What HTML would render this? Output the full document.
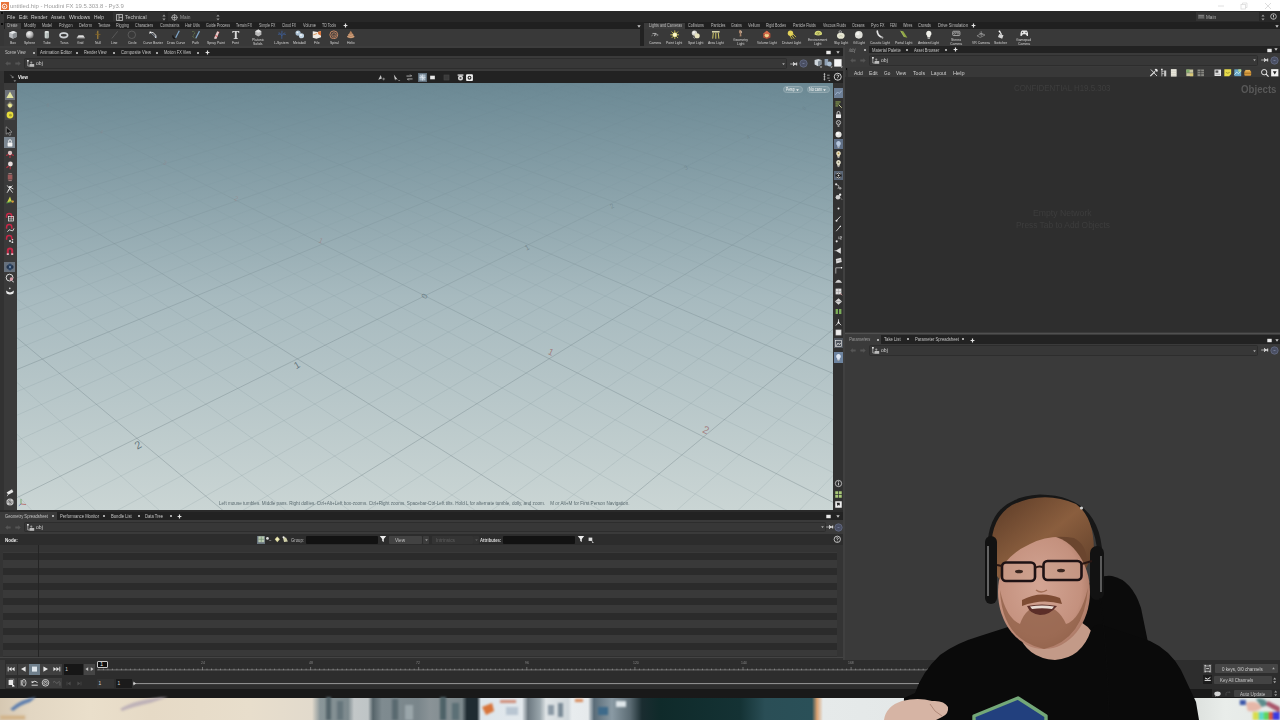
<!DOCTYPE html><html><head><meta charset="utf-8"><title>untitled.hip - Houdini FX 19.5.303.8 - Py3.9</title><style>
*{box-sizing:border-box;margin:0;padding:0}
html,body{width:1280px;height:720px;overflow:hidden;background:#3a3a3a}
body{font-family:"Liberation Sans",sans-serif;color:#c8c8c8;position:relative;font-size:5.5px;line-height:1}
.a{position:absolute}
.t{position:absolute;white-space:nowrap;transform-origin:0 0;line-height:1}
b{font-weight:bold}
</style></head><body>
<div class="a" style="left:0px;top:0px;width:1280px;height:11px;background:#ffffff;"></div>
<div class="t" style="left:10.00px;top:2px;font-size:6.2px;line-height:7px;color:#9c9c9c;transform:scaleX(0.962);">untitled.hip - Houdini FX 19.5.303.8 - Py3.9</div>
<svg class="a" style="left:1px;top:1.5px;" width="8" height="8" viewBox="0 0 8 8"><rect width="8" height="8" fill="#e8743a"/><circle cx="3.6" cy="4.4" r="2.3" fill="none" stroke="#fff" stroke-width="0.9"/><circle cx="3.3" cy="4.7" r="0.8" fill="#fff"/></svg>
<svg class="a" style="left:1217px;top:2px;" width="8" height="8" viewBox="0 0 8 8"><path d="M1 4H7" stroke="#d8d8d8" stroke-width="0.8"/></svg>
<svg class="a" style="left:1240px;top:1.5px;" width="8" height="8" viewBox="0 0 8 8"><rect x="1" y="2.5" width="4.5" height="4.5" fill="none" stroke="#d8d8d8" stroke-width="0.7"/><path d="M2.5 2.5V1H7V5.5H5.5" fill="none" stroke="#d8d8d8" stroke-width="0.7"/></svg>
<svg class="a" style="left:1264px;top:1.5px;" width="8" height="8" viewBox="0 0 8 8"><path d="M1 1L7 7M7 1L1 7" stroke="#d4d4d4" stroke-width="0.8"/></svg>
<div class="a" style="left:0px;top:11px;width:1280px;height:11.3px;background:#282828;"></div>
<div class="a" style="left:0px;top:11px;width:4.2px;height:11.3px;background:#363636;"></div>
<div class="a" style="left:1.4px;top:12.4px;width:1.6px;height:1.6px;background:#0a0a0a;"></div>
<div class="t" style="left:6.60px;top:13px;font-size:6.2px;line-height:7px;color:#d2d2d2;transform:scaleX(0.841);">File</div>
<div class="t" style="left:18.70px;top:13px;font-size:6.2px;line-height:7px;color:#d2d2d2;transform:scaleX(0.824);">Edit</div>
<div class="t" style="left:31.00px;top:13px;font-size:6.2px;line-height:7px;color:#d2d2d2;transform:scaleX(0.811);">Render</div>
<div class="t" style="left:51.00px;top:13px;font-size:6.2px;line-height:7px;color:#d2d2d2;transform:scaleX(0.752);">Assets</div>
<div class="t" style="left:69.00px;top:13px;font-size:6.2px;line-height:7px;color:#d2d2d2;transform:scaleX(0.835);">Windows</div>
<div class="t" style="left:94.00px;top:13px;font-size:6.2px;line-height:7px;color:#d2d2d2;transform:scaleX(0.784);">Help</div>
<div class="a" style="left:113px;top:12.3px;width:52px;height:9px;background:#303030;"></div>
<svg class="a" style="left:116px;top:13.5px;" width="7" height="7" viewBox="0 0 7 7"><rect x="0.6" y="0.6" width="5.8" height="5.8" fill="none" stroke="#bdbdbd" stroke-width="0.9"/><path d="M3 0.6V6.4M3 3.4H6.4" stroke="#bdbdbd" stroke-width="0.8"/></svg>
<div class="t" style="left:125.40px;top:13px;font-size:6.2px;line-height:7px;color:#c4c4c4;transform:scaleX(0.836);">Technical</div>
<svg class="a" style="left:161.5px;top:13.5px;" width="4" height="7" viewBox="0 0 4 7"><path d="M2 0.5L3.6 2.6H0.4ZM2 6.5L3.6 4.4H0.4Z" fill="#9a9a9a"/></svg>
<div class="a" style="left:168px;top:12.3px;width:49px;height:9px;background:#303030;"></div>
<svg class="a" style="left:171px;top:13.5px;" width="7" height="7" viewBox="0 0 7 7"><circle cx="3.5" cy="3.5" r="2.6" fill="none" stroke="#bdbdbd" stroke-width="0.8"/><circle cx="3.5" cy="3.5" r="0.9" fill="#bdbdbd"/><path d="M3.5 0V7M0 3.5H7" stroke="#bdbdbd" stroke-width="0.5"/></svg>
<div class="t" style="left:180.00px;top:13px;font-size:6.2px;line-height:7px;color:#9e9e9e;transform:scaleX(0.781);">Main</div>
<svg class="a" style="left:216px;top:13.5px;" width="4" height="7" viewBox="0 0 4 7"><path d="M2 0.5L3.6 2.6H0.4ZM2 6.5L3.6 4.4H0.4Z" fill="#9a9a9a"/></svg>
<div class="a" style="left:1196px;top:12.3px;width:63px;height:9px;background:#333;"></div>
<svg class="a" style="left:1197.5px;top:13.5px;" width="7" height="6" viewBox="0 0 7 6"><rect x="0" y="0.5" width="6.5" height="4.5" fill="#555"/><path d="M0.5 1.5H6M0.5 3H6" stroke="#999" stroke-width="0.6"/></svg>
<div class="t" style="left:1206.00px;top:14px;font-size:6px;line-height:6px;color:#b4b4b4;transform:scaleX(0.769);">Main</div>
<svg class="a" style="left:1260.5px;top:13.5px;" width="4" height="7" viewBox="0 0 4 7"><path d="M2 0.5L3.6 2.6H0.4ZM2 6.5L3.6 4.4H0.4Z" fill="#9a9a9a"/></svg>
<svg class="a" style="left:1269.5px;top:13.2px;" width="7" height="7" viewBox="0 0 7 7"><circle cx="3.5" cy="3.5" r="2.8" fill="none" stroke="#d0d0d0" stroke-width="0.8"/><path d="M3.5 1.8V4M3.5 4.6V5.4" stroke="#d0d0d0" stroke-width="0.9"/></svg>
<div class="a" style="left:0px;top:22.3px;width:1280px;height:7px;background:#202020;"></div>
<div class="a" style="left:0px;top:29.2px;width:1280px;height:16.6px;background:#393939;"></div>
<div class="a" style="left:0px;top:45.8px;width:1280px;height:1.2px;background:#252525;"></div>
<div class="a" style="left:640px;top:22.3px;width:3.5px;height:23.5px;background:#222;"></div>
<div class="a" style="left:0px;top:22.3px;width:4.2px;height:23.5px;background:#363636;"></div>
<div class="a" style="left:1.4px;top:23.4px;width:1.6px;height:1.6px;background:#0a0a0a;"></div>
<div class="a" style="left:4.8px;top:22.6px;width:15.8px;height:6.8px;background:#3b3b3b;"></div>
<div class="a" style="left:643.5px;top:22.6px;width:41.5px;height:6.8px;background:#3b3b3b;"></div>
<div class="t" style="left:7.00px;top:22px;font-size:5.2px;line-height:6px;color:#bcbcbc;transform:scaleX(0.673);">Create</div>
<div class="t" style="left:24.00px;top:22px;font-size:5.2px;line-height:6px;color:#bcbcbc;transform:scaleX(0.783);">Modify</div>
<div class="t" style="left:42.00px;top:22px;font-size:5.2px;line-height:6px;color:#bcbcbc;transform:scaleX(0.706);">Model</div>
<div class="t" style="left:59.00px;top:22px;font-size:5.2px;line-height:6px;color:#bcbcbc;transform:scaleX(0.718);">Polygon</div>
<div class="t" style="left:79.00px;top:22px;font-size:5.2px;line-height:6px;color:#bcbcbc;transform:scaleX(0.763);">Deform</div>
<div class="t" style="left:97.50px;top:22px;font-size:5.2px;line-height:6px;color:#bcbcbc;transform:scaleX(0.733);">Texture</div>
<div class="t" style="left:116.00px;top:22px;font-size:5.2px;line-height:6px;color:#bcbcbc;transform:scaleX(0.737);">Rigging</div>
<div class="t" style="left:135.00px;top:22px;font-size:5.2px;line-height:6px;color:#bcbcbc;transform:scaleX(0.708);">Characters</div>
<div class="t" style="left:159.50px;top:22px;font-size:5.2px;line-height:6px;color:#bcbcbc;transform:scaleX(0.741);">Constraints</div>
<div class="t" style="left:185.00px;top:22px;font-size:5.2px;line-height:6px;color:#bcbcbc;transform:scaleX(0.711);">Hair Utils</div>
<div class="t" style="left:206.00px;top:22px;font-size:5.2px;line-height:6px;color:#bcbcbc;transform:scaleX(0.704);">Guide Process</div>
<div class="t" style="left:236.00px;top:22px;font-size:5.2px;line-height:6px;color:#bcbcbc;transform:scaleX(0.667);">Terrain FX</div>
<div class="t" style="left:259.00px;top:22px;font-size:5.2px;line-height:6px;color:#bcbcbc;transform:scaleX(0.688);">Simple FX</div>
<div class="t" style="left:282.00px;top:22px;font-size:5.2px;line-height:6px;color:#bcbcbc;transform:scaleX(0.646);">Cloud FX</div>
<div class="t" style="left:302.50px;top:22px;font-size:5.2px;line-height:6px;color:#bcbcbc;transform:scaleX(0.749);">Volume</div>
<div class="t" style="left:322.00px;top:22px;font-size:5.2px;line-height:6px;color:#bcbcbc;transform:scaleX(0.686);">TD Tools</div>
<div class="t" style="left:648.75px;top:22px;font-size:5.2px;line-height:6px;color:#bcbcbc;transform:scaleX(0.714);">Lights and Cameras</div>
<div class="t" style="left:688.00px;top:22px;font-size:5.2px;line-height:6px;color:#bcbcbc;transform:scaleX(0.719);">Collisions</div>
<div class="t" style="left:710.50px;top:22px;font-size:5.2px;line-height:6px;color:#bcbcbc;transform:scaleX(0.727);">Particles</div>
<div class="t" style="left:731.00px;top:22px;font-size:5.2px;line-height:6px;color:#bcbcbc;transform:scaleX(0.718);">Grains</div>
<div class="t" style="left:748.00px;top:22px;font-size:5.2px;line-height:6px;color:#bcbcbc;transform:scaleX(0.769);">Vellum</div>
<div class="t" style="left:766.00px;top:22px;font-size:5.2px;line-height:6px;color:#bcbcbc;transform:scaleX(0.685);">Rigid Bodies</div>
<div class="t" style="left:793.00px;top:22px;font-size:5.2px;line-height:6px;color:#bcbcbc;transform:scaleX(0.704);">Particle Fluids</div>
<div class="t" style="left:822.50px;top:22px;font-size:5.2px;line-height:6px;color:#bcbcbc;transform:scaleX(0.688);">Viscous Fluids</div>
<div class="t" style="left:852.00px;top:22px;font-size:5.2px;line-height:6px;color:#bcbcbc;transform:scaleX(0.698);">Oceans</div>
<div class="t" style="left:870.50px;top:22px;font-size:5.2px;line-height:6px;color:#bcbcbc;transform:scaleX(0.719);">Pyro FX</div>
<div class="t" style="left:889.50px;top:22px;font-size:5.2px;line-height:6px;color:#bcbcbc;transform:scaleX(0.592);">FEM</div>
<div class="t" style="left:902.50px;top:22px;font-size:5.2px;line-height:6px;color:#bcbcbc;transform:scaleX(0.715);">Wires</div>
<div class="t" style="left:918.00px;top:22px;font-size:5.2px;line-height:6px;color:#bcbcbc;transform:scaleX(0.738);">Crowds</div>
<div class="t" style="left:937.50px;top:22px;font-size:5.2px;line-height:6px;color:#bcbcbc;transform:scaleX(0.792);">Drive Simulation</div>
<svg class="a" style="left:342.5px;top:23.3px;" width="5" height="5" viewBox="0 0 5 5"><path d="M2.5 0.6V4.4M0.6 2.5H4.4" stroke="#e4e4e4" stroke-width="1.2"/></svg>
<svg class="a" style="left:971.3px;top:23.3px;" width="5" height="5" viewBox="0 0 5 5"><path d="M2.5 0.6V4.4M0.6 2.5H4.4" stroke="#e4e4e4" stroke-width="1.2"/></svg>
<svg class="a" style="left:636.5px;top:24.5px;" width="4" height="3" viewBox="0 0 4 3"><path d="M0.3 0.3H3.7L2 2.7Z" fill="#c8c8c8"/></svg>
<svg class="a" style="left:1275px;top:24.5px;" width="4" height="3" viewBox="0 0 4 3"><path d="M0.3 0.3H3.7L2 2.7Z" fill="#c8c8c8"/></svg>
<div class="t" style="left:10.04px;top:40px;font-size:4.3px;line-height:5px;color:#d4d4d4;transform:scaleX(0.800);">Box</div>
<div class="t" style="left:24.45px;top:40px;font-size:4.3px;line-height:5px;color:#d4d4d4;transform:scaleX(0.800);">Sphere</div>
<div class="t" style="left:43.14px;top:40px;font-size:4.3px;line-height:5px;color:#d4d4d4;transform:scaleX(0.800);">Tube</div>
<div class="t" style="left:59.79px;top:40px;font-size:4.3px;line-height:5px;color:#d4d4d4;transform:scaleX(0.800);">Torus</div>
<div class="t" style="left:77.25px;top:40px;font-size:4.3px;line-height:5px;color:#d4d4d4;transform:scaleX(0.800);">Grid</div>
<div class="t" style="left:94.54px;top:40px;font-size:4.3px;line-height:5px;color:#d4d4d4;transform:scaleX(0.800);">Null</div>
<div class="t" style="left:111.25px;top:40px;font-size:4.3px;line-height:5px;color:#d4d4d4;transform:scaleX(0.800);">Line</div>
<div class="t" style="left:127.60px;top:40px;font-size:4.3px;line-height:5px;color:#d4d4d4;transform:scaleX(0.800);">Circle</div>
<div class="t" style="left:142.56px;top:40px;font-size:4.3px;line-height:5px;color:#d4d4d4;transform:scaleX(0.800);">Curve Bezier</div>
<div class="t" style="left:166.92px;top:40px;font-size:4.3px;line-height:5px;color:#d4d4d4;transform:scaleX(0.800);">Draw Curve</div>
<div class="t" style="left:192.46px;top:40px;font-size:4.3px;line-height:5px;color:#d4d4d4;transform:scaleX(0.800);">Path</div>
<div class="t" style="left:206.61px;top:40px;font-size:4.3px;line-height:5px;color:#d4d4d4;transform:scaleX(0.800);">Spray Paint</div>
<div class="t" style="left:232.06px;top:40px;font-size:4.3px;line-height:5px;color:#d4d4d4;transform:scaleX(0.800);">Font</div>
<div class="t" style="left:251.88px;top:37px;font-size:4.3px;line-height:5px;color:#d4d4d4;transform:scaleX(0.800);">Platonic</div>
<div class="t" style="left:253.32px;top:41px;font-size:4.3px;line-height:5px;color:#d4d4d4;transform:scaleX(0.800);">Solids</div>
<div class="t" style="left:274.24px;top:40px;font-size:4.3px;line-height:5px;color:#d4d4d4;transform:scaleX(0.800);">L-System</div>
<div class="t" style="left:293.00px;top:40px;font-size:4.3px;line-height:5px;color:#d4d4d4;transform:scaleX(0.800);">Metaball</div>
<div class="t" style="left:314.23px;top:40px;font-size:4.3px;line-height:5px;color:#d4d4d4;transform:scaleX(0.800);">File</div>
<div class="t" style="left:329.60px;top:40px;font-size:4.3px;line-height:5px;color:#d4d4d4;transform:scaleX(0.800);">Spiral</div>
<div class="t" style="left:347.18px;top:40px;font-size:4.3px;line-height:5px;color:#d4d4d4;transform:scaleX(0.800);">Helix</div>
<div class="t" style="left:648.88px;top:40px;font-size:4.3px;line-height:5px;color:#d4d4d4;transform:scaleX(0.800);">Camera</div>
<div class="t" style="left:666.37px;top:40px;font-size:4.3px;line-height:5px;color:#d4d4d4;transform:scaleX(0.800);">Point Light</div>
<div class="t" style="left:687.75px;top:40px;font-size:4.3px;line-height:5px;color:#d4d4d4;transform:scaleX(0.800);">Spot Light</div>
<div class="t" style="left:708.16px;top:40px;font-size:4.3px;line-height:5px;color:#d4d4d4;transform:scaleX(0.800);">Area Light</div>
<div class="t" style="left:732.95px;top:37px;font-size:4.3px;line-height:5px;color:#d4d4d4;transform:scaleX(0.800);">Geometry</div>
<div class="t" style="left:736.77px;top:41px;font-size:4.3px;line-height:5px;color:#d4d4d4;transform:scaleX(0.800);">Light</div>
<div class="t" style="left:756.81px;top:40px;font-size:4.3px;line-height:5px;color:#d4d4d4;transform:scaleX(0.800);">Volume Light</div>
<div class="t" style="left:782.44px;top:40px;font-size:4.3px;line-height:5px;color:#d4d4d4;transform:scaleX(0.800);">Distant Light</div>
<div class="t" style="left:808.34px;top:37px;font-size:4.3px;line-height:5px;color:#d4d4d4;transform:scaleX(0.800);">Environment</div>
<div class="t" style="left:814.27px;top:41px;font-size:4.3px;line-height:5px;color:#d4d4d4;transform:scaleX(0.800);">Light</div>
<div class="t" style="left:833.93px;top:40px;font-size:4.3px;line-height:5px;color:#d4d4d4;transform:scaleX(0.800);">Sky Light</div>
<div class="t" style="left:852.73px;top:40px;font-size:4.3px;line-height:5px;color:#d4d4d4;transform:scaleX(0.800);">GI Light</div>
<div class="t" style="left:870.06px;top:40px;font-size:4.3px;line-height:5px;color:#d4d4d4;transform:scaleX(0.800);">Caustic Light</div>
<div class="t" style="left:895.05px;top:40px;font-size:4.3px;line-height:5px;color:#d4d4d4;transform:scaleX(0.800);">Portal Light</div>
<div class="t" style="left:918.23px;top:40px;font-size:4.3px;line-height:5px;color:#d4d4d4;transform:scaleX(0.800);">Ambient Light</div>
<div class="t" style="left:951.43px;top:37px;font-size:4.3px;line-height:5px;color:#d4d4d4;transform:scaleX(0.800);">Stereo</div>
<div class="t" style="left:950.38px;top:41px;font-size:4.3px;line-height:5px;color:#d4d4d4;transform:scaleX(0.800);">Camera</div>
<div class="t" style="left:972.02px;top:40px;font-size:4.3px;line-height:5px;color:#d4d4d4;transform:scaleX(0.800);">VR Camera</div>
<div class="t" style="left:994.40px;top:40px;font-size:4.3px;line-height:5px;color:#d4d4d4;transform:scaleX(0.800);">Switcher</div>
<div class="t" style="left:1016.45px;top:37px;font-size:4.3px;line-height:5px;color:#d4d4d4;transform:scaleX(0.800);">Gamepad</div>
<div class="t" style="left:1017.88px;top:41px;font-size:4.3px;line-height:5px;color:#d4d4d4;transform:scaleX(0.800);">Camera</div>
<svg class="a" style="left:8.2px;top:29.6px;" width="9.6" height="9.6" viewBox="0 0 10 10"><path d="M1.2 2.6L5.4 1L9 2.4V7.2L5 9L1.2 7.4Z" fill="#b9bcbf"/><path d="M1.2 2.6L5 4.2L9 2.4L5.4 1Z" fill="#e4e6e8"/><path d="M5 4.2V9L9 7.2V2.4Z" fill="#8c9094"/></svg>
<svg class="a" style="left:25.2px;top:29.6px;" width="9.6" height="9.6" viewBox="0 0 10 10"><defs><radialGradient id="sg" cx="0.38" cy="0.32" r="0.7"><stop offset="0" stop-color="#f4f4f4"/><stop offset="0.6" stop-color="#b8b8b8"/><stop offset="1" stop-color="#6c6c6c"/></radialGradient></defs><circle cx="5" cy="5" r="4" fill="url(#sg)"/></svg>
<svg class="a" style="left:42.2px;top:29.6px;" width="9.6" height="9.6" viewBox="0 0 10 10"><rect x="2.7" y="1.4" width="4.6" height="7.4" rx="1.6" fill="#aeb6b4"/><ellipse cx="5" cy="2" rx="2.3" ry="0.9" fill="#e2e6e4"/><rect x="3.4" y="2.8" width="1.2" height="5.4" fill="#d6dcda"/></svg>
<svg class="a" style="left:59.2px;top:29.6px;" width="9.6" height="9.6" viewBox="0 0 10 10"><ellipse cx="5" cy="5.6" rx="4" ry="2.4" fill="none" stroke="#c4c8cc" stroke-width="1.7"/><ellipse cx="5" cy="5.1" rx="3.8" ry="2.2" fill="none" stroke="#eceef0" stroke-width="0.5"/></svg>
<svg class="a" style="left:75.7px;top:29.6px;" width="9.6" height="9.6" viewBox="0 0 10 10"><path d="M0.8 8L2.6 5.6H7.6L9.2 8Z" fill="#dcdcdc"/><path d="M0.8 8H9.2V8.8H0.8Z" fill="#9a9a9a"/></svg>
<svg class="a" style="left:92.7px;top:29.6px;" width="9.6" height="9.6" viewBox="0 0 10 10"><path d="M5 0.8V9.4" stroke="#b08a3a" stroke-width="1.1"/><path d="M2.4 4.6H7.8" stroke="#8a6a28" stroke-width="0.8"/><path d="M3.6 2.6L6.6 6.8" stroke="#7a5e22" stroke-width="0.6"/></svg>
<svg class="a" style="left:109.7px;top:29.6px;" width="9.6" height="9.6" viewBox="0 0 10 10"><path d="M2 8.8L8 1.4" stroke="#5e5e5e" stroke-width="0.9"/></svg>
<svg class="a" style="left:127.2px;top:29.6px;" width="9.6" height="9.6" viewBox="0 0 10 10"><circle cx="5" cy="5" r="3.9" fill="none" stroke="#6a6a6a" stroke-width="0.7"/></svg>
<svg class="a" style="left:147.7px;top:29.6px;" width="9.6" height="9.6" viewBox="0 0 10 10"><path d="M1.5 3.6C3.6 1 6.8 3 8.6 6.6" fill="none" stroke="#e6e6e6" stroke-width="1"/><path d="M2 2L8.6 8" stroke="#a8b4c8" stroke-width="0.8"/><circle cx="2.4" cy="2.4" r="0.9" fill="#fff"/><circle cx="8" cy="7.4" r="0.9" fill="#dfe6f0"/></svg>
<svg class="a" style="left:171.2px;top:29.6px;" width="9.6" height="9.6" viewBox="0 0 10 10"><path d="M8.6 0.8L4.6 8.6" stroke="#7fa6c8" stroke-width="1.3"/><path d="M2 5.6C1.6 8.4 3.6 9.2 4.8 8.2" fill="none" stroke="#141414" stroke-width="1.3"/></svg>
<svg class="a" style="left:191.2px;top:29.6px;" width="9.6" height="9.6" viewBox="0 0 10 10"><path d="M8.8 1.2L5 8.6" stroke="#7fa6c8" stroke-width="1.3"/><path d="M1.4 1.6C4.6 1 4.6 4.4 2.2 5.4C1.2 6.6 2.6 8.6 4.6 8.8" fill="none" stroke="#7d9a58" stroke-width="0.7" stroke-dasharray="1 0.8"/></svg>
<svg class="a" style="left:210.7px;top:29.6px;" width="9.6" height="9.6" viewBox="0 0 10 10"><path d="M3 8.8L6.4 1.2L8.6 2.2L5.6 9.4Z" fill="#e6c9c9"/><path d="M4.4 5.8L7 6.8" stroke="#c44" stroke-width="1"/><path d="M8 1.6L10 3.4" stroke="#a33" stroke-width="0.7"/></svg>
<svg class="a" style="left:230.7px;top:29.6px;" width="9.6" height="9.6" viewBox="0 0 10 10"><path d="M1.4 1H8.6V3H7.8C7.7 2.2 7.2 1.9 6 1.9V8C6 8.5 6.4 8.6 7.2 8.7V9.3H2.8V8.7C3.6 8.6 4 8.5 4 8V1.9C2.8 1.9 2.3 2.2 2.2 3H1.4Z" fill="#d8d8d8"/></svg>
<svg class="a" style="left:253.7px;top:29.2px;" width="8.6" height="8.6" viewBox="0 0 10 10"><path d="M5 0.6L8.6 2.6V6.6L5 8.6L1.4 6.6V2.6Z" fill="#b8b8b8"/><path d="M5 0.6L8.6 2.6L5 4.4L1.4 2.6Z" fill="#e2e2e2"/></svg>
<svg class="a" style="left:276.7px;top:29.6px;" width="9.6" height="9.6" viewBox="0 0 10 10"><path d="M5 9.2V4.6M5 6L2 2.4M5 6L8.2 2.6M5 4.6L5.2 0.8M3.4 4.2L1 4.4M6.8 4.2L9.2 4.6" stroke="#3e5f9a" stroke-width="0.9" fill="none"/></svg>
<svg class="a" style="left:294.7px;top:29.6px;" width="9.6" height="9.6" viewBox="0 0 10 10"><circle cx="3.2" cy="3.2" r="2.7" fill="#a9bfd2"/><circle cx="6.8" cy="6" r="2.7" fill="#c2d4e2"/><circle cx="2.6" cy="2.5" r="1" fill="#eef4f8"/><circle cx="6.2" cy="5.2" r="1" fill="#f4f8fa"/></svg>
<svg class="a" style="left:312.2px;top:29.6px;" width="9.6" height="9.6" viewBox="0 0 10 10"><path d="M0.8 1.4L6 2.2L9.4 1V7.6L4.6 9.2L0.8 8Z" fill="#f0ece6"/><path d="M6 2.2L9.4 1V6L6.6 4.4Z" fill="#d8743a"/><path d="M1.4 5L5.4 3.6" stroke="#e09a5a" stroke-width="1"/></svg>
<svg class="a" style="left:329.2px;top:29.6px;" width="9.6" height="9.6" viewBox="0 0 10 10"><circle cx="5" cy="5" r="4.1" fill="none" stroke="#c88a66" stroke-width="1"/><circle cx="5.2" cy="5.2" r="2.3" fill="none" stroke="#c88a66" stroke-width="0.9"/><circle cx="5.3" cy="5.4" r="0.7" fill="#c88a66"/></svg>
<svg class="a" style="left:346.2px;top:29.6px;" width="9.6" height="9.6" viewBox="0 0 10 10"><path d="M5 0.8L9 7.4Q5 10 1 7.4Z" fill="#b4825e"/><path d="M2.4 4.8Q5 6.4 7.6 4.8M1.4 6.8Q5 8.8 8.6 6.8" fill="none" stroke="#e2b894" stroke-width="0.7"/></svg>
<svg class="a" style="left:650.2px;top:29.6px;" width="9.6" height="9.6" viewBox="0 0 10 10"><path d="M2.6 3.6H6.4V5H4.8V6.4" fill="none" stroke="#c8c8c8" stroke-width="0.8"/><path d="M7 4.2L8.6 5.2L7 6.2" fill="none" stroke="#aaa" stroke-width="0.6"/><path d="M1.4 6.2L3.2 5" stroke="#999" stroke-width="0.6"/></svg>
<svg class="a" style="left:669.7px;top:29.6px;" width="9.6" height="9.6" viewBox="0 0 10 10"><circle cx="5" cy="5" r="2.4" fill="#f6f2b0"/><path d="M5 0.4V9.6M0.4 5H9.6M1.6 1.6L8.4 8.4M8.4 1.6L1.6 8.4" stroke="#e4d85a" stroke-width="0.8"/><circle cx="5" cy="5" r="1.9" fill="#fbf9d4"/></svg>
<svg class="a" style="left:690.7px;top:29.6px;" width="9.6" height="9.6" viewBox="0 0 10 10"><circle cx="3.6" cy="3.2" r="2.8" fill="#d2d2cc"/><circle cx="6.4" cy="6" r="2.7" fill="#e8e4c0"/><circle cx="3" cy="2.6" r="1.2" fill="#f4f4f0"/><path d="M2 7L4 8.8" stroke="#bbb" stroke-width="0.8"/></svg>
<svg class="a" style="left:711.2px;top:29.6px;" width="9.6" height="9.6" viewBox="0 0 10 10"><path d="M1 1.2H9V2.6H1Z" fill="#f2eebc"/><path d="M2.4 3L1.8 9M5 3V9.2M7.6 3L8.2 9" stroke="#d8cf6a" stroke-width="1"/></svg>
<svg class="a" style="left:736.2px;top:29.2px;" width="8.6" height="8.6" viewBox="0 0 10 10"><path d="M4.4 0.8C7 1.4 7.6 4 6 5.4L6.4 8.4L4.2 8.6L4.6 5.6C3 4.6 3 2 4.4 0.8Z" fill="#a8846a"/><path d="M5.6 2L6.6 4.4" stroke="#e8d8c8" stroke-width="0.8"/></svg>
<svg class="a" style="left:761.95px;top:29.6px;" width="9.6" height="9.6" viewBox="0 0 10 10"><path d="M5 0.8L8.8 3.8V7.8L5 9.4L1.2 7.8V3.8Z" fill="#b0503a"/><circle cx="5" cy="5.6" r="2.2" fill="#f0d08a"/><path d="M5 0.8L8.8 3.8L5 4.4L1.2 3.8Z" fill="#d26a4a"/></svg>
<svg class="a" style="left:787.2px;top:29.6px;" width="9.6" height="9.6" viewBox="0 0 10 10"><circle cx="3.6" cy="3.4" r="2.8" fill="#e2d25a"/><path d="M4.6 5L7.6 9M6 3.8L9.4 7.4M3 6L5.4 9.4" stroke="#d4c444" stroke-width="0.9"/></svg>
<svg class="a" style="left:813.7px;top:29.2px;" width="8.6" height="8.6" viewBox="0 0 10 10"><path d="M0.6 6.4A4.4 4.4 0 0 1 9.4 6.4Q5 8.6 0.6 6.4Z" fill="#d9dc7a"/><ellipse cx="5" cy="5" rx="2.2" ry="1.2" fill="none" stroke="#8a8c3a" stroke-width="0.6"/><circle cx="5" cy="5" r="0.6" fill="#6a6c2a"/></svg>
<svg class="a" style="left:836.2px;top:29.6px;" width="9.6" height="9.6" viewBox="0 0 10 10"><ellipse cx="5" cy="6" rx="4" ry="3.2" fill="#e6e6d2"/><circle cx="4.4" cy="2" r="1.3" fill="none" stroke="#ddd" stroke-width="0.6"/><path d="M3 6.6Q5 5 7 6.6" stroke="#b8b89a" stroke-width="0.6" fill="none"/></svg>
<svg class="a" style="left:853.95px;top:29.6px;" width="9.6" height="9.6" viewBox="0 0 10 10"><circle cx="5" cy="5" r="4" fill="#deded8"/><circle cx="4" cy="3.8" r="1.8" fill="#f2f2ee"/></svg>
<svg class="a" style="left:875.2px;top:29.6px;" width="9.6" height="9.6" viewBox="0 0 10 10"><path d="M2.4 1.2Q2.4 5.6 7.6 7.8" fill="none" stroke="#e4e4e4" stroke-width="1.8" stroke-linecap="round"/><path d="M6.4 7.2L8.6 8.6" stroke="#999" stroke-width="1.4"/></svg>
<svg class="a" style="left:898.95px;top:29.6px;" width="9.6" height="9.6" viewBox="0 0 10 10"><path d="M1.6 0.8L4.4 1.2L8.8 8L5.4 7.2Z" fill="#8fa644"/><path d="M1.6 0.8L5.4 7.2" stroke="#c8d87a" stroke-width="0.6"/></svg>
<svg class="a" style="left:923.95px;top:29.6px;" width="9.6" height="9.6" viewBox="0 0 10 10"><path d="M5 0.8A3 3 0 0 1 6.6 6.2V7.6H3.4V6.2A3 3 0 0 1 5 0.8Z" fill="#f0f0ea"/><rect x="3.8" y="7.8" width="2.4" height="1.4" fill="#bbb"/></svg>
<svg class="a" style="left:952.2px;top:29.2px;" width="8.6" height="8.6" viewBox="0 0 10 10"><rect x="0.8" y="2.6" width="8.4" height="5" rx="1" fill="none" stroke="#d0d0d0" stroke-width="0.8"/><circle cx="3" cy="5" r="1.1" fill="none" stroke="#d0d0d0" stroke-width="0.6"/><circle cx="7" cy="5" r="1.1" fill="none" stroke="#d0d0d0" stroke-width="0.6"/><path d="M4.2 3.8H5.8" stroke="#d0d0d0" stroke-width="0.6"/></svg>
<svg class="a" style="left:976.2px;top:29.6px;" width="9.6" height="9.6" viewBox="0 0 10 10"><path d="M1 6L6 3.6L9.4 5.2L4.4 7.8Z" fill="none" stroke="#9c9c9c" stroke-width="0.7"/><path d="M5.4 1.2V6.6M3.4 3.2L7.6 4.8" stroke="#b4b4b4" stroke-width="0.6"/></svg>
<svg class="a" style="left:996.2px;top:29.6px;" width="9.6" height="9.6" viewBox="0 0 10 10"><path d="M3.4 4.2L7.8 5.6L6.4 9L2 7.4Z" fill="#d4d4d4"/><path d="M3.6 1.2L5.8 4.8" stroke="#e8e8e8" stroke-width="1.2"/><circle cx="3.6" cy="1.4" r="0.9" fill="#fff"/></svg>
<svg class="a" style="left:1019.7px;top:29.2px;" width="8.6" height="8.6" viewBox="0 0 10 10"><path d="M2.4 1.8H7.6C9 2.2 9.8 6 9.4 8C8.4 8.8 7.4 7 6.6 6H3.4C2.6 7 1.6 8.8 0.6 8C0.2 6 1 2.2 2.4 1.8Z" fill="#e8e8e8"/><circle cx="3" cy="4" r="0.8" fill="#555"/><circle cx="7" cy="4" r="0.8" fill="#555"/></svg>
<div class="a" style="left:0px;top:45.8px;width:843px;height:2.3px;background:#2b2b2b;"></div>
<div class="a" style="left:0px;top:46.4px;width:843px;height:1.2px;background:#3d3d3d;"></div>
<div class="a" style="left:0px;top:48px;width:843px;height:8px;background:#222222;"></div>
<div class="a" style="left:843px;top:45.8px;width:2.2px;height:614px;background:#404040;"></div>
<div class="a" style="left:0px;top:48px;width:37px;height:8.2px;background:#3a3a3a;"></div>
<div class="t" style="left:5.25px;top:49px;font-size:5.2px;line-height:6px;color:#c4c4c4;transform:scaleX(0.758);">Scene View</div>
<div class="a" style="left:33px;top:52px;width:2px;height:2px;background:#c8c8c8;opacity:0.8"></div>
<div class="t" style="left:40.00px;top:49px;font-size:5.2px;line-height:6px;color:#c4c4c4;transform:scaleX(0.839);">Animation Editor</div>
<div class="a" style="left:76px;top:52px;width:2px;height:2px;background:#c8c8c8;opacity:0.8"></div>
<div class="t" style="left:84.40px;top:49px;font-size:5.2px;line-height:6px;color:#c4c4c4;transform:scaleX(0.762);">Render View</div>
<div class="a" style="left:113px;top:52px;width:2px;height:2px;background:#c8c8c8;opacity:0.8"></div>
<div class="t" style="left:120.60px;top:49px;font-size:5.2px;line-height:6px;color:#c4c4c4;transform:scaleX(0.800);">Composite View</div>
<div class="a" style="left:156px;top:52px;width:2px;height:2px;background:#c8c8c8;opacity:0.8"></div>
<div class="t" style="left:163.75px;top:49px;font-size:5.2px;line-height:6px;color:#c4c4c4;transform:scaleX(0.750);">Motion FX View</div>
<div class="a" style="left:197px;top:52px;width:2px;height:2px;background:#c8c8c8;opacity:0.8"></div>
<svg class="a" style="left:204.5px;top:49.8px;" width="5" height="5" viewBox="0 0 5 5"><path d="M2.5 0.6V4.4M0.6 2.5H4.4" stroke="#e4e4e4" stroke-width="1.2"/></svg>
<svg class="a" style="left:826px;top:49.7px;" width="5" height="5" viewBox="0 0 5 5"><rect x="0.3" y="0.8" width="4.4" height="3.4" fill="#e8e8e8"/></svg>
<svg class="a" style="left:836px;top:50.5px;" width="4" height="3" viewBox="0 0 4 3"><path d="M0.3 0.3H3.7L2 2.7Z" fill="#c8c8c8"/></svg>
<div class="a" style="left:0px;top:56px;width:843px;height:15px;background:#3a3a3a;"></div>
<svg class="a" style="left:5px;top:61.0px;" width="6" height="5" viewBox="0 0 6 5"><path d="M0.3 2.5L2.8 0.3V1.6H5.7V3.4H2.8V4.7Z" fill="#555"/></svg>
<svg class="a" style="left:15px;top:61.0px;" width="6" height="5" viewBox="0 0 6 5"><path d="M5.7 2.5L3.2 0.3V1.6H0.3V3.4H3.2V4.7Z" fill="#555"/></svg>
<div class="a" style="left:24px;top:57.7px;width:763px;height:11.6px;background:#373737;border-radius:1.5px;border:0.6px solid #2d2d2d"></div>
<svg class="a" style="left:27px;top:60.0px;" width="7.5" height="7" viewBox="0 0 7.5 7"><path d="M0.8 0.5V6H3" stroke="#c8c8c8" stroke-width="0.7" fill="none"/><rect x="0" y="0" width="1.8" height="1.5" fill="#ddd"/><rect x="2.6" y="4" width="4.6" height="2.8" fill="#bbb"/><circle cx="4.3" cy="2.6" r="1.1" fill="#999"/></svg>
<div class="t" style="left:36.20px;top:60px;font-size:5.6px;line-height:6px;color:#d0d0d0;transform:scaleX(0.910);">obj</div>
<svg class="a" style="left:782px;top:62.5px;" width="3" height="2.4" viewBox="0 0 3 2.4"><path d="M0.2 0.2H2.8L1.5 2.2Z" fill="#aaa"/></svg>
<svg class="a" style="left:790px;top:60.5px;" width="8" height="6" viewBox="0 0 8 6"><path d="M0.2 3H3.4" stroke="#d8d8d8" stroke-width="0.7"/><path d="M3.2 0.9H4.1V2.1L6.2 2.4V1.4H7.2V4.6H6.2V3.6L4.1 3.9V5.1H3.2Z" fill="#e0e0e0"/></svg>
<svg class="a" style="left:799.3px;top:59.0px;" width="9" height="9" viewBox="0 0 9 9"><circle cx="4.5" cy="4.5" r="3.7" fill="#4a4f63" stroke="#646c84" stroke-width="0.8"/><path d="M3.5 4.5H5.5" stroke="#7f8aa5" stroke-width="0.7"/></svg>
<div class="a" style="left:0px;top:71.2px;width:843px;height:11.8px;background:#222222;"></div>
<div class="a" style="left:0px;top:71.2px;width:3.5px;height:11.8px;background:#333;"></div>
<div class="t" style="left:18.00px;top:74px;font-size:5.6px;line-height:6px;color:#f0f0f0;font-weight:bold;transform:scaleX(0.790);">View</div>
<div class="a" style="left:17px;top:83px;width:816px;height:426.5px;background:linear-gradient(#6b8893 0,#6f8c97 3%,#a7babf 50%,#cad5d4 100%);"></div>
<svg class="a" style="left:17px;top:83px;overflow:hidden" width="816" height="427" viewBox="0 0 816 427"><defs><linearGradient id="gf" x1="0" y1="0" x2="0" y2="1"><stop offset="0" stop-color="#fff" stop-opacity="0.05"/><stop offset="0.25" stop-color="#fff" stop-opacity="0.28"/><stop offset="0.6" stop-color="#fff" stop-opacity="0.85"/><stop offset="1" stop-color="#fff" stop-opacity="1"/></linearGradient><mask id="gm"><rect width="816" height="427" fill="url(#gf)"/></mask></defs><g mask="url(#gm)" fill="none"><path d="M11.0 -2.0L-2.0 0.9M783.2 -2.0L818.0 6.4M40.7 -2.0L-2.0 7.7M756.5 -2.0L818.0 13.1M70.3 -2.0L-2.0 14.7M729.8 -2.0L818.0 20.0M99.8 -2.0L-2.0 22.0M703.0 -2.0L818.0 27.3M158.7 -2.0L-2.0 37.5M649.2 -2.0L818.0 42.6M188.0 -2.0L-2.0 45.7M622.2 -2.0L818.0 50.8M217.2 -2.0L-2.0 54.3M595.2 -2.0L818.0 59.3M246.4 -2.0L-2.0 63.3M568.1 -2.0L818.0 68.1M304.5 -2.0L-2.0 82.4M513.6 -2.0L818.0 87.1M333.4 -2.0L-2.0 92.6M486.3 -2.0L818.0 97.3M362.3 -2.0L-2.0 103.3M458.9 -2.0L818.0 107.9M391.1 -2.0L-2.0 114.6M431.5 -2.0L818.0 119.0M448.4 -2.0L-2.0 138.8M376.4 -2.0L818.0 143.1M477.0 -2.0L-2.0 151.8M348.7 -2.0L818.0 156.1M505.5 -2.0L-2.0 165.5M321.0 -2.0L818.0 169.8M533.9 -2.0L-2.0 180.1M293.2 -2.0L818.0 184.2M590.6 -2.0L-2.0 211.6M237.5 -2.0L818.0 215.7M618.8 -2.0L-2.0 228.8M209.5 -2.0L818.0 232.9M646.9 -2.0L-2.0 247.1M181.4 -2.0L818.0 251.1M675.0 -2.0L-2.0 266.5M153.3 -2.0L818.0 270.6M731.0 -2.0L-2.0 309.4M96.8 -2.0L818.0 313.5M758.8 -2.0L-2.0 333.1M68.5 -2.0L818.0 337.3M786.6 -2.0L-2.0 358.6M40.1 -2.0L818.0 362.9M814.4 -2.0L-2.0 386.0M11.6 -2.0L818.0 390.5M818.0 24.6L35.2 428.5M-2.0 20.9L772.3 428.5M818.0 40.7L98.2 428.5M-2.0 37.6L710.1 428.5M818.0 58.1L161.1 428.5M-2.0 55.9L647.8 428.5M818.0 77.2L223.8 428.5M-2.0 75.9L585.3 428.5M818.0 121.4L348.7 428.5M-2.0 122.4L459.9 428.5M818.0 147.2L411.0 428.5M-2.0 149.5L396.9 428.5M818.0 175.9L473.1 428.5M-2.0 179.9L333.8 428.5M818.0 208.2L535.0 428.5M-2.0 214.2L270.6 428.5M818.0 286.4L658.5 428.5M-2.0 297.7L143.6 428.5M818.0 334.4L720.0 428.5M-2.0 349.3L79.9 428.5M818.0 390.4L781.3 428.5M-2.0 409.6L16.0 428.5" stroke="#5b7078" stroke-opacity="0.16" stroke-width="0.8"/><path d="M809.8 -2.0L818.0 -0.1M129.3 -2.0L-2.0 29.6M676.1 -2.0L818.0 34.8M275.4 -2.0L-2.0 72.6M540.9 -2.0L818.0 77.4M419.8 -2.0L-2.0 126.4M404.0 -2.0L818.0 130.8M562.3 -2.0L-2.0 195.4M265.4 -2.0L818.0 199.5M703.0 -2.0L-2.0 287.3M125.1 -2.0L818.0 291.3M818.0 9.9L-2.0 415.6M-2.0 5.5L818.0 420.3M818.0 98.2L286.3 428.5M-2.0 98.0L522.7 428.5M818.0 244.7L596.8 428.5M-2.0 253.1L207.2 428.5" stroke="#4d6068" stroke-opacity="0.3" stroke-width="0.9"/></g><g font-family="Liberation Sans, sans-serif"><text x="407.5" y="215.9" font-size="8.2" fill="#5a6c74" fill-opacity="0.76" text-anchor="middle" transform="rotate(-60 407.5 213.0)">0</text><text x="534.0" y="272.2" font-size="9.2" fill="#a07878" fill-opacity="0.90" text-anchor="middle" transform="rotate(25 534.0 269.0)">1</text><text x="689.0" y="350.7" font-size="10.6" fill="#a07878" fill-opacity="0.90" text-anchor="middle" transform="rotate(25 689.0 347.0)">2</text><text x="280.0" y="285.3" font-size="9.5" fill="#5a6c74" fill-opacity="0.90" text-anchor="middle" transform="rotate(-30 280.0 282.0)">1</text><text x="121.0" y="365.8" font-size="10.9" fill="#5a6c74" fill-opacity="0.90" text-anchor="middle" transform="rotate(-30 121.0 362.0)">2</text><text x="304.0" y="160.1" font-size="7.3" fill="#a07878" fill-opacity="0.56" text-anchor="middle" transform="rotate(25 304.0 157.6)">1</text><text x="219.4" y="117.7" font-size="6.5" fill="#a07878" fill-opacity="0.41" text-anchor="middle" transform="rotate(25 219.4 115.4)">2</text><text x="147.9" y="81.7" font-size="5.9" fill="#a07878" fill-opacity="0.35" text-anchor="middle" transform="rotate(25 147.9 79.6)">3</text><text x="84.5" y="50.6" font-size="5.4" fill="#a07878" fill-opacity="0.35" text-anchor="middle" transform="rotate(25 84.5 48.7)">4</text><text x="510.0" y="167.1" font-size="7.4" fill="#5a6c74" fill-opacity="0.59" text-anchor="middle" transform="rotate(-30 510.0 164.5)">1</text><text x="595.0" y="125.3" font-size="6.7" fill="#5a6c74" fill-opacity="0.44" text-anchor="middle" transform="rotate(-30 595.0 123.0)">2</text><text x="669.0" y="86.6" font-size="6.0" fill="#5a6c74" fill-opacity="0.35" text-anchor="middle" transform="rotate(-30 669.0 84.5)">3</text><text x="731.0" y="55.9" font-size="5.4" fill="#5a6c74" fill-opacity="0.35" text-anchor="middle" transform="rotate(-30 731.0 54.0)">4</text><text x="787.0" y="26.7" font-size="4.9" fill="#5a6c74" fill-opacity="0.35" text-anchor="middle" transform="rotate(-30 787.0 25.0)">5</text><text x="31.0" y="23.7" font-size="4.9" fill="#a07878" fill-opacity="0.35" text-anchor="middle" transform="rotate(25 31.0 22.0)">5</text></g></svg>
<div class="t" style="left:219.00px;top:501px;font-size:4.6px;line-height:5px;color:#5b6b70;transform:scaleX(1.003);">Left mouse tumbles. Middle pans. Right dollies. Ctrl+Alt+Left box-zooms. Ctrl+Right zooms. Spacebar-Ctrl-Left tilts. Hold L for alternate tumble, dolly, and zoom.&nbsp;&nbsp;&nbsp;&nbsp;M or Alt+M for First Person Navigation.</div>
<div class="a" style="left:783px;top:86.10000000000001px;width:19.700000000000045px;height:7.2px;background:#7d98a1;border-radius:3.6px;border:0.6px solid #93a9b1"></div>
<div class="t" style="left:786.00px;top:87px;font-size:4.8px;line-height:5px;color:#f4f4f4;transform:scaleX(0.686);">Persp</div>
<div class="a" style="left:806.9px;top:86.10000000000001px;width:22.899999999999977px;height:7.2px;background:#7d98a1;border-radius:3.6px;border:0.6px solid #93a9b1"></div>
<div class="t" style="left:808.60px;top:87px;font-size:4.8px;line-height:5px;color:#f4f4f4;transform:scaleX(0.786);">No cam</div>
<svg class="a" style="left:796.4px;top:89px;" width="3" height="2.4" viewBox="0 0 3 2.4"><path d="M0.2 0.2H2.8L1.5 2.2Z" fill="#eee"/></svg>
<svg class="a" style="left:823px;top:89px;" width="3" height="2.4" viewBox="0 0 3 2.4"><path d="M0.2 0.2H2.8L1.5 2.2Z" fill="#eee"/></svg>
<svg class="a" style="left:18px;top:497px;" width="10" height="10" viewBox="0 0 10 10"><path d="M3 7L3 2" stroke="#5a9a4a" stroke-width="0.7"/><path d="M3 7L8 7.6" stroke="#b05050" stroke-width="0.7"/><path d="M3 7L0.8 8.8" stroke="#5060b0" stroke-width="0.7"/></svg>
<div class="a" style="left:0px;top:83px;width:17px;height:426.5px;background:#3a3a3a;"></div>
<div class="a" style="left:0px;top:83px;width:4px;height:426.5px;background:#323232;"></div>
<div class="a" style="left:5px;top:89.6px;width:10px;height:30px;background:#474747;"></div>
<div class="a" style="left:5px;top:89.8px;width:10px;height:10px;background:#6d727a;"></div>
<svg class="a" style="left:4.800000000000001px;top:89.8px;" width="10" height="10" viewBox="0 0 10 10"><path d="M5 1.4L8.6 8H1.4Z" fill="#e2e4a0"/><circle cx="7.6" cy="3" r="1" fill="#777"/></svg>
<svg class="a" style="left:4.800000000000001px;top:99.8px;" width="10" height="10" viewBox="0 0 10 10"><path d="M5 1.2L8.6 5L5 8.8L1.4 5Z" fill="#7e7e70"/><circle cx="5" cy="5.6" r="2" fill="#ece890"/></svg>
<svg class="a" style="left:4.800000000000001px;top:109.6px;" width="10" height="10" viewBox="0 0 10 10"><circle cx="5" cy="5" r="3.4" fill="#e6dc3c"/><circle cx="5.4" cy="5.2" r="1.4" fill="#a8a030"/></svg>
<svg class="a" style="left:4.4px;top:126.0px;" width="10" height="10" viewBox="0 0 10 10"><path d="M2.2 0.8V8.2L4.2 6.6L5.6 9.4L6.8 8.8L5.4 6.2H8Z" fill="#141414" stroke="#bdbdbd" stroke-width="0.6"/></svg>
<div class="a" style="left:4px;top:137px;width:11.3px;height:11px;background:#7c8791;"></div>
<svg class="a" style="left:4.800000000000001px;top:137.6px;" width="10" height="10" viewBox="0 0 10 10"><rect x="2.6" y="4.4" width="4.8" height="4" rx="0.6" fill="#f4f4f4"/><path d="M3.6 4.4V3.2A1.4 1.4 0 0 1 6.4 3.2V4.4" fill="none" stroke="#f4f4f4" stroke-width="0.9"/></svg>
<svg class="a" style="left:4.800000000000001px;top:149.0px;" width="10" height="10" viewBox="0 0 10 10"><circle cx="5" cy="4" r="2.2" fill="#d8c0c0"/><path d="M1.2 6.6L3.6 5.6M8.8 6.6L6.4 5.6M5 6.4V9" stroke="#c03040" stroke-width="1.1"/></svg>
<svg class="a" style="left:4.800000000000001px;top:160.0px;" width="10" height="10" viewBox="0 0 10 10"><circle cx="5.4" cy="4" r="2.4" fill="#e8dede"/><path d="M1.4 7.8L3.6 6.2M5.2 6.8V9.2" stroke="#c03040" stroke-width="1.1"/></svg>
<svg class="a" style="left:4.800000000000001px;top:172.3px;" width="10" height="10" viewBox="0 0 10 10"><rect x="2.8" y="2.6" width="4.6" height="5" fill="#9a5a5a"/><path d="M3.4 1.6H6.8M3.4 8.6H6.8" stroke="#c8a0a0" stroke-width="0.7"/></svg>
<svg class="a" style="left:4.800000000000001px;top:184.0px;" width="10" height="10" viewBox="0 0 10 10"><path d="M2.2 1.4L7.6 8.6M7.4 1.6L3 6.4M2 8.8L4.4 5.2M5 3.2L8.4 5" stroke="#e4e4e4" stroke-width="0.9"/><circle cx="5" cy="3" r="1" fill="#fff"/></svg>
<svg class="a" style="left:4.800000000000001px;top:195.4px;" width="10" height="10" viewBox="0 0 10 10"><path d="M2 7.6L5 1.4L6.8 6.6Z" fill="#c8d048"/><path d="M1.4 8L8.6 6" stroke="#5a9a4a" stroke-width="1.1"/><circle cx="7.6" cy="6.6" r="1.2" fill="#d89a3a"/></svg>
<svg class="a" style="left:4.800000000000001px;top:211.7px;" width="10" height="10" viewBox="0 0 10 10"><path d="M1.6 5.8V4A2.6 2.6 0 0 1 6.8 4V5.8" fill="none" stroke="#c82848" stroke-width="1.5"/><rect x="3.6" y="4.6" width="5" height="4.4" fill="none" stroke="#eee" stroke-width="0.7"/><path d="M6.1 4.6V9M3.6 6.8H8.6" stroke="#eee" stroke-width="0.5"/></svg>
<svg class="a" style="left:4.800000000000001px;top:222.6px;" width="10" height="10" viewBox="0 0 10 10"><path d="M1.6 5.8V4A2.6 2.6 0 0 1 6.8 4V5.8" fill="none" stroke="#c82848" stroke-width="1.5"/><path d="M2.4 8.8Q4 5.4 6 7.4T9 5.4" fill="none" stroke="#eee" stroke-width="0.8"/></svg>
<svg class="a" style="left:4.800000000000001px;top:234.0px;" width="10" height="10" viewBox="0 0 10 10"><path d="M1.6 5.8V4A2.6 2.6 0 0 1 6.8 4V5.8" fill="none" stroke="#c82848" stroke-width="1.5"/><circle cx="5" cy="7" r="0.9" fill="#eee"/><circle cx="7.4" cy="8.2" r="0.9" fill="#eee"/><circle cx="7.6" cy="5.8" r="0.7" fill="#ddd"/></svg>
<svg class="a" style="left:4.800000000000001px;top:246.0px;" width="10" height="10" viewBox="0 0 10 10"><path d="M1.8 8.6V4.6A3.2 3.2 0 0 1 8.2 4.6V8.6H6.2V4.8A1.2 1.2 0 0 0 3.8 4.8V8.6Z" fill="#c82848"/><path d="M1.8 7.4H3.8V8.8H1.8ZM6.2 7.4H8.2V8.8H6.2Z" fill="#f0f0f0"/></svg>
<div class="a" style="left:4px;top:261.6px;width:11.3px;height:10.4px;background:#66707c;"></div>
<svg class="a" style="left:4.800000000000001px;top:261.8px;" width="10" height="10" viewBox="0 0 10 10"><circle cx="3.4" cy="5" r="2" fill="#22344c"/><circle cx="6.6" cy="5" r="2" fill="#22344c"/><circle cx="5" cy="3.2" r="1.8" fill="#2c4464"/><circle cx="5" cy="6.8" r="1.8" fill="#2c4464"/><circle cx="5" cy="5" r="1" fill="#7d96b4"/></svg>
<svg class="a" style="left:4.800000000000001px;top:273.2px;" width="10" height="10" viewBox="0 0 10 10"><circle cx="4.6" cy="4.6" r="3.4" fill="none" stroke="#ececec" stroke-width="0.9"/><circle cx="6.4" cy="6" r="1.7" fill="#d89aa6"/><path d="M7 8L9 9.2" stroke="#ddd" stroke-width="0.8"/></svg>
<svg class="a" style="left:4.800000000000001px;top:285.6px;" width="10" height="10" viewBox="0 0 10 10"><path d="M1 4.6Q5 8.2 9 4.6L8.4 7.4Q5 9.6 1.6 7.4Z" fill="#ececec"/><circle cx="4.8" cy="2.4" r="0.8" fill="#ddd"/></svg>
<svg class="a" style="left:4.800000000000001px;top:487.3px;" width="10" height="10" viewBox="0 0 10 10"><path d="M1.6 5.6L7 2.2L8.4 5L3.4 7.8Z" fill="#e6e6e6"/><path d="M3 7.4L2.2 9.2" stroke="#ccc" stroke-width="0.8"/></svg>
<svg class="a" style="left:4.800000000000001px;top:497.3px;" width="10" height="10" viewBox="0 0 10 10"><circle cx="5" cy="5" r="3.6" fill="#c8c8c8"/><path d="M1.6 5H8.4M5 1.4V8.6M2.6 2.6L7.4 7.4" stroke="#555" stroke-width="0.6"/></svg>
<div class="a" style="left:833px;top:83px;width:10.3px;height:426.5px;background:#313131;"></div>
<div class="a" style="left:833.6px;top:88px;width:9.2px;height:9.6px;background:#6d7f96;"></div>
<svg class="a" style="left:833.8px;top:88.3px;" width="9" height="9" viewBox="0 0 10 10"><path d="M1.4 7.6L4 4.4L5.8 6.2L8.6 3" fill="none" stroke="#a9bdd6" stroke-width="0.9"/></svg>
<svg class="a" style="left:833.8px;top:99.5px;" width="9" height="9" viewBox="0 0 10 10"><path d="M1.6 2.2H7.4M1.6 4.4H6M1.6 6.6H4.6" stroke="#a4c05a" stroke-width="1"/><path d="M5.4 5.4L8.6 8.6" stroke="#d8d8a0" stroke-width="1"/></svg>
<svg class="a" style="left:833.8px;top:109.5px;" width="9" height="9" viewBox="0 0 10 10"><rect x="2.2" y="4.6" width="5.6" height="4.2" rx="0.6" fill="#e8e8e8"/><path d="M3.4 4.6V3.2A1.6 1.6 0 0 1 6.6 3.2V4.6" fill="none" stroke="#e8e8e8" stroke-width="0.9"/></svg>
<svg class="a" style="left:833.8px;top:119.1px;" width="9" height="9" viewBox="0 0 10 10"><circle cx="5" cy="4" r="2.4" fill="none" stroke="#d8d8d8" stroke-width="0.8"/><path d="M3.4 2.4L6.6 5.6M6.6 2.4L3.4 5.6" stroke="#bbb" stroke-width="0.5"/><rect x="4" y="7" width="2" height="1.6" fill="#bbb"/></svg>
<svg class="a" style="left:833.8px;top:129.5px;" width="9" height="9" viewBox="0 0 10 10"><circle cx="5" cy="5" r="3.4" fill="#e6e6e2"/><circle cx="4" cy="4" r="1.4" fill="#fff"/></svg>
<div class="a" style="left:833.6px;top:139.4px;width:9.2px;height:9.6px;background:#5f6f86;"></div>
<svg class="a" style="left:833.8px;top:139.7px;" width="9" height="9" viewBox="0 0 10 10"><path d="M5 1.2A2.6 2.6 0 0 1 6.4 6V7.4H3.6V6A2.6 2.6 0 0 1 5 1.2Z" fill="#b8c8de"/><rect x="4" y="7.8" width="2" height="1.2" fill="#aaa"/></svg>
<svg class="a" style="left:833.8px;top:149.5px;" width="9" height="9" viewBox="0 0 10 10"><path d="M5 1.2A2.6 2.6 0 0 1 6.4 6V7.4H3.6V6A2.6 2.6 0 0 1 5 1.2Z" fill="#e8dfc0"/><rect x="4" y="7.8" width="2" height="1.2" fill="#aaa"/><circle cx="5" cy="3.8" r="0.9" fill="#b89a4a"/></svg>
<svg class="a" style="left:833.8px;top:159.1px;" width="9" height="9" viewBox="0 0 10 10"><path d="M5 1.2A2.6 2.6 0 0 1 6.4 6V7.4H3.6V6A2.6 2.6 0 0 1 5 1.2Z" fill="#e8e4d0"/><rect x="4" y="7.8" width="2" height="1.2" fill="#aaa"/><circle cx="5" cy="3.8" r="0.9" fill="#8a8a6a"/></svg>
<div class="a" style="left:833.6px;top:170.8px;width:9.2px;height:9.6px;background:#5a6676;"></div>
<svg class="a" style="left:833.8px;top:171.1px;" width="9" height="9" viewBox="0 0 10 10"><circle cx="5" cy="5" r="3.4" fill="#161616"/><path d="M2.4 3.4Q5 1 7.6 3.4M2.4 6.6Q5 9 7.6 6.6" stroke="#e8e8e8" stroke-width="0.9" fill="none"/><circle cx="5" cy="5" r="1" fill="#ddd"/></svg>
<svg class="a" style="left:833.8px;top:181.7px;" width="9" height="9" viewBox="0 0 10 10"><path d="M2 2.4L5.6 4.4L4.4 7.6" fill="none" stroke="#c8c8c8" stroke-width="0.8"/><circle cx="2.4" cy="2.6" r="1.2" fill="#ddd"/><circle cx="6.8" cy="7" r="1.4" fill="#999"/></svg>
<svg class="a" style="left:833.8px;top:192.1px;" width="9" height="9" viewBox="0 0 10 10"><circle cx="4.4" cy="5.8" r="2.6" fill="#d0d0d0"/><circle cx="6.8" cy="3" r="1.3" fill="#eee"/><path d="M7.6 7L9 8.6" stroke="#bbb" stroke-width="0.8"/></svg>
<svg class="a" style="left:833.8px;top:203.5px;" width="9" height="9" viewBox="0 0 10 10"><circle cx="5" cy="5" r="1.1" fill="#f0f0f0"/></svg>
<svg class="a" style="left:833.8px;top:214.3px;" width="9" height="9" viewBox="0 0 10 10"><path d="M2.6 7.6L7.2 2.6" stroke="#e8e8e8" stroke-width="0.9"/><circle cx="2.8" cy="7.4" r="1.1" fill="#e8e8e8"/></svg>
<svg class="a" style="left:833.8px;top:224.3px;" width="9" height="9" viewBox="0 0 10 10"><path d="M2.4 8L7.4 2.2" stroke="#e8e8e8" stroke-width="0.9"/><path d="M7.8 1.6L6 2.4L7.4 3.6Z" fill="#fff"/></svg>
<svg class="a" style="left:833.8px;top:235.0px;" width="9" height="9" viewBox="0 0 10 10"><circle cx="3" cy="7" r="1.2" fill="#e8e8e8"/><path d="M5.4 1.6V4.6M6.6 1.8H8.4V3.2H6.8V4.6H8.6" stroke="#e8e8e8" stroke-width="0.6" fill="none"/></svg>
<svg class="a" style="left:833.8px;top:245.5px;" width="9" height="9" viewBox="0 0 10 10"><path d="M1.8 5.2L7.6 1.8V8.6Z" fill="#dcdcdc"/><path d="M2.2 5.2H0.6" stroke="#bbb" stroke-width="0.8"/></svg>
<svg class="a" style="left:833.8px;top:255.5px;" width="9" height="9" viewBox="0 0 10 10"><path d="M2 3.4L7.8 2L8.6 6.8L2.6 8.4Z" fill="#dcdcdc"/><path d="M2.4 5.6L8.2 4.2" stroke="#888" stroke-width="0.5"/></svg>
<svg class="a" style="left:833.8px;top:266.3px;" width="9" height="9" viewBox="0 0 10 10"><path d="M2 8.4V2H8.6" fill="none" stroke="#cfcfcf" stroke-width="0.8"/><circle cx="8.4" cy="2" r="0.8" fill="#fff"/></svg>
<svg class="a" style="left:833.8px;top:276.1px;" width="9" height="9" viewBox="0 0 10 10"><path d="M1.2 7.6Q5 1 9 7.6Z" fill="#d0d0d0"/></svg>
<svg class="a" style="left:833.8px;top:286.5px;" width="9" height="9" viewBox="0 0 10 10"><rect x="1.8" y="1.8" width="6.4" height="6.4" fill="#dcdcdc"/><path d="M1.8 5H8.2M5 1.8V8.2" stroke="#999" stroke-width="0.5"/><path d="M7 7L9.2 9.2" stroke="#d09090" stroke-width="0.9"/></svg>
<svg class="a" style="left:833.8px;top:297.3px;" width="9" height="9" viewBox="0 0 10 10"><path d="M5 1.4L9 5L5 8.6L1 5Z" fill="#d4d4d4"/><path d="M1 5H9" stroke="#888" stroke-width="0.6"/></svg>
<svg class="a" style="left:833.8px;top:307.3px;" width="9" height="9" viewBox="0 0 10 10"><rect x="1.8" y="2.2" width="2.6" height="5.6" fill="#7cae5a"/><rect x="5.6" y="2.2" width="2.6" height="5.6" fill="#7cae5a"/></svg>
<svg class="a" style="left:833.8px;top:318.1px;" width="9" height="9" viewBox="0 0 10 10"><path d="M5 5L2 8.4M5 5L8 8M5 5V1.4" stroke="#e2e2e2" stroke-width="0.9"/><circle cx="5" cy="5" r="1" fill="#fff"/></svg>
<svg class="a" style="left:833.8px;top:328.1px;" width="9" height="9" viewBox="0 0 10 10"><rect x="2" y="2" width="6" height="6" fill="#ececec" stroke="#888" stroke-width="0.6"/></svg>
<div class="a" style="left:833.6px;top:338.2px;width:9.2px;height:10.2px;background:#50565e;"></div>
<svg class="a" style="left:833.8px;top:338.8px;" width="9" height="9" viewBox="0 0 10 10"><rect x="1.6" y="1.6" width="6.8" height="6.8" fill="none" stroke="#e8e8e8" stroke-width="0.7"/><path d="M2.6 7.4L4.4 4.6L6 6.2L7.4 4.4" fill="none" stroke="#fff" stroke-width="0.8"/></svg>
<div class="a" style="left:833.6px;top:352.4px;width:9.2px;height:10.2px;background:#6d84a0;"></div>
<svg class="a" style="left:833.8px;top:353.0px;" width="9" height="9" viewBox="0 0 10 10"><path d="M5 1.2A2.6 2.6 0 0 1 6.4 6V7.4H3.6V6A2.6 2.6 0 0 1 5 1.2Z" fill="#dfe8f4"/><rect x="4" y="7.8" width="2" height="1.2" fill="#aaa"/></svg>
<svg class="a" style="left:833.8px;top:479.0px;" width="9" height="9" viewBox="0 0 10 10"><circle cx="5" cy="5" r="3.5" fill="none" stroke="#e4e4e4" stroke-width="0.8"/><path d="M5 4.2V7" stroke="#e4e4e4" stroke-width="0.9"/><circle cx="5" cy="3" r="0.6" fill="#e4e4e4"/></svg>
<svg class="a" style="left:833.8px;top:489.5px;" width="9" height="9" viewBox="0 0 10 10"><rect x="1.4" y="1.4" width="3.2" height="3.2" fill="#a8c878"/><rect x="5.4" y="1.4" width="3.2" height="3.2" fill="#a8c878"/><rect x="1.4" y="5.4" width="3.2" height="3.2" fill="#a8c878"/><rect x="5.4" y="5.4" width="3.2" height="3.2" fill="#a8c878"/></svg>
<svg class="a" style="left:833.8px;top:499.5px;" width="9" height="9" viewBox="0 0 10 10"><rect x="1.4" y="1.4" width="7.2" height="7.2" fill="#f0f0f0"/><path d="M3 3H6.4V6.4L5.2 5.4L4 7Z" fill="#222"/></svg>
<svg class="a" style="left:8.7px;top:72.5px;" width="9" height="9" viewBox="0 0 10 10"><path d="M1.6 2L4.6 5.2M4.6 5.2L3 5M4.6 5.2L4.4 3.6" stroke="#9a9a9a" stroke-width="0.8" fill="none"/><path d="M5 8.4H8L6.5 9.8Z" fill="#b0b0b0"/></svg>
<svg class="a" style="left:376.5px;top:72.8px;" width="9" height="9" viewBox="0 0 10 10"><path d="M1.4 7.4L4.2 2.2L5.4 6.2Z" fill="#c8c8c8"/><path d="M5.8 6.6H9M7.4 5.2V8.2" stroke="#aaa" stroke-width="0.7"/></svg>
<svg class="a" style="left:391.5px;top:72.8px;" width="9" height="9" viewBox="0 0 10 10"><path d="M2 1.6L6.4 7.6L4.2 6.6L3.4 8.4Z" fill="#c8c8c8"/><path d="M7 8.4H9" stroke="#aaa" stroke-width="0.7"/></svg>
<svg class="a" style="left:404.5px;top:72.8px;" width="9" height="9" viewBox="0 0 10 10"><path d="M1.6 3.4H7.4L5.8 1.8M8.4 6.6H2.6L4.2 8.2" fill="none" stroke="#c8c8c8" stroke-width="0.9"/></svg>
<div class="a" style="left:418.2px;top:72.6px;width:9px;height:9.6px;background:#5f6f7c;"></div>
<svg class="a" style="left:418.1px;top:72.8px;" width="9" height="9" viewBox="0 0 10 10"><rect x="1.6" y="1.6" width="6.8" height="6.8" fill="#a9b9c6"/><path d="M1.6 5H8.4M5 1.6V8.4M3 3L7 7" stroke="#e8eef4" stroke-width="0.6"/></svg>
<svg class="a" style="left:428.0px;top:72.8px;" width="9" height="9" viewBox="0 0 10 10"><rect x="2.4" y="3" width="5.2" height="4" fill="#e8e8e8"/></svg>
<svg class="a" style="left:441.5px;top:72.8px;" width="9" height="9" viewBox="0 0 10 10"><rect x="2.2" y="2.2" width="5.6" height="5.6" fill="#3a3a3a" stroke="#484848" stroke-width="0.6"/></svg>
<svg class="a" style="left:455.5px;top:72.8px;" width="9" height="9" viewBox="0 0 10 10"><circle cx="5" cy="5.6" r="2.8" fill="#d8d8d8"/><path d="M1.8 1.6H8.2V3H1.8Z" fill="#e8e8e8"/><circle cx="5" cy="5.6" r="1.2" fill="#555"/></svg>
<svg class="a" style="left:465.0px;top:72.8px;" width="9" height="9" viewBox="0 0 10 10"><rect x="1.2" y="1.4" width="7.6" height="7.4" rx="1" fill="#f2f2f2"/><circle cx="5" cy="5.2" r="2.2" fill="#2c2c2c"/><circle cx="5" cy="5.2" r="0.9" fill="#eee"/></svg>
<svg class="a" style="left:822.25px;top:72.05px;" width="9.5" height="9.5" viewBox="0 0 10 10"><path d="M2.6 1V9M1.6 2.4H3.6M1.6 5H3.6M1.6 7.6H3.6M5.4 3.4H8M5.4 6.4H8" stroke="#d4d4d4" stroke-width="0.7"/><path d="M6.4 8.4H9L7.7 9.8Z" fill="#aaa"/></svg>
<svg class="a" style="left:833.45px;top:72.05px;" width="9.5" height="9.5" viewBox="0 0 10 10"><circle cx="5" cy="5" r="3.7" fill="none" stroke="#ececec" stroke-width="0.9"/><path d="M3.8 3.8Q5 2.4 6.2 3.8Q6.2 4.8 5 5.4V6.2" fill="none" stroke="#ececec" stroke-width="0.9"/><circle cx="5" cy="7.4" r="0.5" fill="#ececec"/></svg>
<svg class="a" style="left:813.0px;top:58.3px;" width="10" height="10" viewBox="0 0 10 10"><path d="M1.6 2L5.4 1L8.4 2V6.4L5 8.2L1.6 6.6Z" fill="#cfd6dc"/><path d="M5 3.4V8.2L8.4 6.4V2Z" fill="#7f8a94"/><path d="M6.6 8.6H9.4L8 10Z" fill="#bbb"/></svg>
<svg class="a" style="left:822.6px;top:58.3px;" width="10" height="10" viewBox="0 0 10 10"><rect x="1.6" y="1" width="3.6" height="6.4" rx="0.6" fill="#8fa0b4"/><circle cx="6.4" cy="6" r="2.4" fill="#a9bccf"/><path d="M7 8.6H9.8L8.4 10Z" fill="#bbb"/></svg>
<svg class="a" style="left:833.0px;top:58.2px;" width="10" height="10" viewBox="0 0 10 10"><rect x="1.2" y="1.2" width="7.4" height="7.4" fill="#f4f4f4"/><path d="M7.4 8.6H10L8.7 10Z" fill="#bbb"/></svg>
<div class="a" style="left:845px;top:45.8px;width:435px;height:7.6px;background:#222222;"></div>
<div class="a" style="left:844.5px;top:45.8px;width:24px;height:7.8px;background:#3a3a3a;"></div>
<div class="t" style="left:849.00px;top:47px;font-size:5.2px;line-height:6px;color:#9a9a9a;transform:scaleX(0.775);font-style:italic">/obj</div>
<div class="a" style="left:864px;top:49px;width:2px;height:2px;background:#c8c8c8;opacity:0.8"></div>
<div class="t" style="left:872.00px;top:47px;font-size:5.2px;line-height:6px;color:#c4c4c4;transform:scaleX(0.803);">Material Palette</div>
<div class="a" style="left:906px;top:49px;width:2px;height:2px;background:#c8c8c8;opacity:0.8"></div>
<div class="t" style="left:913.75px;top:47px;font-size:5.2px;line-height:6px;color:#c4c4c4;transform:scaleX(0.753);">Asset Browser</div>
<div class="a" style="left:945px;top:49px;width:2px;height:2px;background:#c8c8c8;opacity:0.8"></div>
<svg class="a" style="left:952.5px;top:47.2px;" width="5" height="5" viewBox="0 0 5 5"><path d="M2.5 0.6V4.4M0.6 2.5H4.4" stroke="#e4e4e4" stroke-width="1.2"/></svg>
<svg class="a" style="left:1266.5px;top:47.6px;" width="5" height="5" viewBox="0 0 5 5"><rect x="0.3" y="0.8" width="4.4" height="3.4" fill="#e8e8e8"/></svg>
<svg class="a" style="left:1274.3px;top:48.2px;" width="4" height="3" viewBox="0 0 4 3"><path d="M0.3 0.3H3.7L2 2.7Z" fill="#c8c8c8"/></svg>
<div class="a" style="left:845px;top:53.4px;width:435px;height:13.8px;background:#3a3a3a;"></div>
<svg class="a" style="left:850px;top:57.9px;" width="6" height="5" viewBox="0 0 6 5"><path d="M0.3 2.5L2.8 0.3V1.6H5.7V3.4H2.8V4.7Z" fill="#555"/></svg>
<svg class="a" style="left:860px;top:57.9px;" width="6" height="5" viewBox="0 0 6 5"><path d="M5.7 2.5L3.2 0.3V1.6H0.3V3.4H3.2V4.7Z" fill="#555"/></svg>
<div class="a" style="left:869px;top:54.800000000000004px;width:388.5px;height:11.2px;background:#373737;border-radius:1.5px;border:0.6px solid #2d2d2d"></div>
<svg class="a" style="left:872px;top:56.9px;" width="7.5" height="7" viewBox="0 0 7.5 7"><path d="M0.8 0.5V6H3" stroke="#c8c8c8" stroke-width="0.7" fill="none"/><rect x="0" y="0" width="1.8" height="1.5" fill="#ddd"/><rect x="2.6" y="4" width="4.6" height="2.8" fill="#bbb"/><circle cx="4.3" cy="2.6" r="1.1" fill="#999"/></svg>
<div class="t" style="left:881.20px;top:57px;font-size:5.6px;line-height:6px;color:#d0d0d0;transform:scaleX(0.910);">obj</div>
<svg class="a" style="left:1252.5px;top:59.4px;" width="3" height="2.4" viewBox="0 0 3 2.4"><path d="M0.2 0.2H2.8L1.5 2.2Z" fill="#aaa"/></svg>
<svg class="a" style="left:1261px;top:57.3px;" width="8" height="6" viewBox="0 0 8 6"><path d="M0.2 3H3.4" stroke="#d8d8d8" stroke-width="0.7"/><path d="M3.2 0.9H4.1V2.1L6.2 2.4V1.4H7.2V4.6H6.2V3.6L4.1 3.9V5.1H3.2Z" fill="#e0e0e0"/></svg>
<svg class="a" style="left:1270.3px;top:55.8px;" width="9" height="9" viewBox="0 0 9 9"><circle cx="4.5" cy="4.5" r="3.7" fill="#4a4f63" stroke="#646c84" stroke-width="0.8"/><path d="M3.5 4.5H5.5" stroke="#7f8aa5" stroke-width="0.7"/></svg>
<div class="a" style="left:845px;top:67.2px;width:435px;height:10.2px;background:#383838;"></div>
<div class="t" style="left:853.75px;top:70px;font-size:6px;line-height:6px;color:#d0d0d0;transform:scaleX(0.820);">Add</div>
<div class="t" style="left:868.75px;top:70px;font-size:6px;line-height:6px;color:#d0d0d0;transform:scaleX(0.846);">Edit</div>
<div class="t" style="left:883.75px;top:70px;font-size:6px;line-height:6px;color:#d0d0d0;transform:scaleX(0.781);">Go</div>
<div class="t" style="left:896.00px;top:70px;font-size:6px;line-height:6px;color:#d0d0d0;transform:scaleX(0.775);">View</div>
<div class="t" style="left:913.00px;top:70px;font-size:6px;line-height:6px;color:#d0d0d0;transform:scaleX(0.857);">Tools</div>
<div class="t" style="left:930.75px;top:70px;font-size:6px;line-height:6px;color:#d0d0d0;transform:scaleX(0.847);">Layout</div>
<div class="t" style="left:952.50px;top:70px;font-size:6px;line-height:6px;color:#d0d0d0;transform:scaleX(0.932);">Help</div>
<div class="a" style="left:845px;top:77.4px;width:435px;height:255.1px;background:#2e2e2e;"></div>
<div class="t" style="left:1014.00px;top:83px;font-size:8.5px;line-height:10px;color:#3e3e3e;transform:scaleX(0.931);">CONFIDENTIAL H19.5.303</div>
<div class="t" style="left:1240.50px;top:83px;font-size:11px;line-height:12px;color:#585858;font-weight:bold;transform:scaleX(0.880);">Objects</div>
<div class="t" style="left:1033.00px;top:208px;font-size:8.5px;line-height:10px;color:#3d3d3d;transform:scaleX(1.017);">Empty Network</div>
<div class="t" style="left:1016.00px;top:220px;font-size:8.5px;line-height:10px;color:#3d3d3d;transform:scaleX(0.987);">Press Tab to Add Objects</div>
<div class="a" style="left:845px;top:332.5px;width:435px;height:2.5px;background:#3c3c3c;"></div>
<div class="a" style="left:845px;top:333px;width:435px;height:1px;background:#505050;"></div>
<div class="a" style="left:845px;top:335px;width:435px;height:9px;background:#222222;"></div>
<div class="a" style="left:845px;top:335px;width:35.5px;height:9.2px;background:#3a3a3a;"></div>
<div class="t" style="left:848.50px;top:336px;font-size:5.2px;line-height:6px;color:#9a9a9a;transform:scaleX(0.800);font-style:italic">Parameters</div>
<div class="a" style="left:845px;top:344px;width:435px;height:11.5px;background:#3a3a3a;"></div>
<div class="a" style="left:845px;top:355px;width:435px;height:305px;background:#3a3a3a;"></div>
<div class="a" style="left:0px;top:509.5px;width:843px;height:2px;background:#2a2a2a;"></div>
<div class="a" style="left:0px;top:511.5px;width:843px;height:8.7px;background:#222222;"></div>
<div class="a" style="left:0px;top:520.2px;width:843px;height:13.9px;background:#3a3a3a;"></div>
<div class="a" style="left:0px;top:534.1px;width:843px;height:10.6px;background:#2c2c2c;"></div>
<div class="a" style="left:0px;top:544.6px;width:843px;height:112px;background:repeating-linear-gradient(#393939 0,#393939 7.6px,#2b2b2b 7.6px,#2b2b2b 15.06px);"></div>
<div class="a" style="left:0px;top:544.6px;width:843px;height:7.4px;background:#343434;"></div>
<div class="a" style="left:0px;top:656.4px;width:843px;height:3.2px;background:#303030;"></div>
<div class="a" style="left:0px;top:657.2px;width:843px;height:1.2px;background:#444;"></div>
<svg class="a" style="left:1149.05px;top:67.65px;" width="9.5" height="9.5" viewBox="0 0 10 10"><path d="M1.4 8.6L6.4 3.6" stroke="#e8e8e8" stroke-width="1.3"/><path d="M6 1.2A2 2 0 0 1 8.8 4L7.4 3.8L6.6 2.6Z" fill="#e8e8e8"/><path d="M2 1.6L8.4 8.4" stroke="#d8d8d8" stroke-width="1"/></svg>
<svg class="a" style="left:1159.05px;top:67.65px;" width="9.5" height="9.5" viewBox="0 0 10 10"><path d="M3 1.4V8.8M3 3.4H5M3 6H5" stroke="#d4d4d4" stroke-width="0.8"/><rect x="5.4" y="2.6" width="2.2" height="6.2" fill="#c8c8c8"/><rect x="2.2" y="0.8" width="1.6" height="1.4" fill="#eee"/></svg>
<svg class="a" style="left:1169.05px;top:67.65px;" width="9.5" height="9.5" viewBox="0 0 10 10"><rect x="2" y="1.2" width="6" height="7.8" fill="#eceae0"/><path d="M2 3.4H8M2 5.6H8M2 7.6H8" stroke="#b8b6a8" stroke-width="0.5"/></svg>
<svg class="a" style="left:1185.25px;top:67.65px;" width="9.5" height="9.5" viewBox="0 0 10 10"><rect x="1.4" y="1.6" width="7.2" height="7" fill="#c9c6a0"/><rect x="1.4" y="1.6" width="3.4" height="3.4" fill="#7fae6a"/><rect x="5.2" y="5.2" width="3.4" height="3.4" fill="#d8c878"/><path d="M1.4 5.1H8.6" stroke="#666" stroke-width="0.5"/></svg>
<svg class="a" style="left:1196.05px;top:67.65px;" width="9.5" height="9.5" viewBox="0 0 10 10"><rect x="1.6" y="1.6" width="6.8" height="7" fill="#8a8a84"/><path d="M1.6 3.8H8.4M1.6 6H8.4M5 1.6V8.6" stroke="#3a3a3a" stroke-width="0.7"/></svg>
<svg class="a" style="left:1212.75px;top:67.65px;" width="9.5" height="9.5" viewBox="0 0 10 10"><rect x="1.6" y="1.6" width="6.8" height="6.8" fill="#e8e8e8"/><rect x="2.6" y="2.6" width="3" height="2.4" fill="#555"/><path d="M2.6 6.6H7.4" stroke="#888" stroke-width="0.7"/></svg>
<svg class="a" style="left:1222.75px;top:67.65px;" width="9.5" height="9.5" viewBox="0 0 10 10"><path d="M1.4 1.4H8.6V6.4L6.4 8.6H1.4Z" fill="#e8dc4a"/><path d="M3 4.6Q5 6.4 7 4.6" stroke="#6a6420" stroke-width="0.6" fill="none"/></svg>
<svg class="a" style="left:1232.75px;top:67.65px;" width="9.5" height="9.5" viewBox="0 0 10 10"><rect x="1.4" y="1.4" width="7.2" height="7.2" fill="#6aa6c8"/><path d="M1.4 7L4 4.4L5.8 6L8.6 3" stroke="#dff" stroke-width="0.8" fill="none"/><rect x="5.6" y="1.4" width="3" height="2.4" fill="#b6d88a"/></svg>
<svg class="a" style="left:1243.25px;top:67.65px;" width="9.5" height="9.5" viewBox="0 0 10 10"><rect x="1.4" y="3.2" width="7.2" height="5" rx="1" fill="#d69a3c"/><rect x="2.4" y="2" width="5.2" height="1.6" fill="#e8b860"/><path d="M1.4 5.6H8.6" stroke="#8a5e1c" stroke-width="0.6"/></svg>
<svg class="a" style="left:1259.75px;top:67.65px;" width="9.5" height="9.5" viewBox="0 0 10 10"><circle cx="4.4" cy="4.4" r="2.8" fill="none" stroke="#ececec" stroke-width="1"/><path d="M6.4 6.4L9 9" stroke="#ececec" stroke-width="1.2"/></svg>
<svg class="a" style="left:1270.25px;top:67.65px;" width="9.5" height="9.5" viewBox="0 0 10 10"><rect x="1.2" y="1.2" width="7.6" height="7.6" fill="#f2f2f2"/><path d="M3 3.4H7L5 6.8Z" fill="#222"/></svg>
<div class="a" style="left:845.5px;top:68px;width:2.5px;height:8.6px;background:#303030;"></div>
<div class="a" style="left:846px;top:68.4px;width:1.4px;height:1.4px;background:#0c0c0c;"></div>
<div class="a" style="left:877px;top:339px;width:2px;height:2px;background:#c8c8c8;opacity:0.8"></div>
<div class="t" style="left:884.40px;top:336px;font-size:5.2px;line-height:6px;color:#c4c4c4;transform:scaleX(0.809);">Take List</div>
<div class="a" style="left:907px;top:338px;width:2px;height:2px;background:#c8c8c8;opacity:0.8"></div>
<div class="t" style="left:915.00px;top:336px;font-size:5.2px;line-height:6px;color:#c4c4c4;transform:scaleX(0.797);">Parameter Spreadsheet</div>
<div class="a" style="left:962px;top:338px;width:2px;height:2px;background:#c8c8c8;opacity:0.8"></div>
<svg class="a" style="left:969.5px;top:337.8px;" width="5" height="5" viewBox="0 0 5 5"><path d="M2.5 0.6V4.4M0.6 2.5H4.4" stroke="#e4e4e4" stroke-width="1.2"/></svg>
<svg class="a" style="left:1266.5px;top:337.5px;" width="5" height="5" viewBox="0 0 5 5"><rect x="0.3" y="0.8" width="4.4" height="3.4" fill="#e8e8e8"/></svg>
<svg class="a" style="left:1274.5px;top:338.5px;" width="4" height="3" viewBox="0 0 4 3"><path d="M0.3 0.3H3.7L2 2.7Z" fill="#c8c8c8"/></svg>
<svg class="a" style="left:850px;top:348.0px;" width="6" height="5" viewBox="0 0 6 5"><path d="M0.3 2.5L2.8 0.3V1.6H5.7V3.4H2.8V4.7Z" fill="#555"/></svg>
<svg class="a" style="left:860px;top:348.0px;" width="6" height="5" viewBox="0 0 6 5"><path d="M5.7 2.5L3.2 0.3V1.6H0.3V3.4H3.2V4.7Z" fill="#555"/></svg>
<div class="a" style="left:869px;top:345.2px;width:389px;height:10.6px;background:#373737;border-radius:1.5px;border:0.6px solid #2d2d2d"></div>
<svg class="a" style="left:872px;top:347.0px;" width="7.5" height="7" viewBox="0 0 7.5 7"><path d="M0.8 0.5V6H3" stroke="#c8c8c8" stroke-width="0.7" fill="none"/><rect x="0" y="0" width="1.8" height="1.5" fill="#ddd"/><rect x="2.6" y="4" width="4.6" height="2.8" fill="#bbb"/><circle cx="4.3" cy="2.6" r="1.1" fill="#999"/></svg>
<div class="t" style="left:881.20px;top:347px;font-size:5.6px;line-height:6px;color:#d0d0d0;transform:scaleX(0.910);">obj</div>
<svg class="a" style="left:1253px;top:349.5px;" width="3" height="2.4" viewBox="0 0 3 2.4"><path d="M0.2 0.2H2.8L1.5 2.2Z" fill="#aaa"/></svg>
<svg class="a" style="left:1261px;top:347.4px;" width="8" height="6" viewBox="0 0 8 6"><path d="M0.2 3H3.4" stroke="#d8d8d8" stroke-width="0.7"/><path d="M3.2 0.9H4.1V2.1L6.2 2.4V1.4H7.2V4.6H6.2V3.6L4.1 3.9V5.1H3.2Z" fill="#e0e0e0"/></svg>
<svg class="a" style="left:1270.0px;top:345.9px;" width="9" height="9" viewBox="0 0 9 9"><circle cx="4.5" cy="4.5" r="3.7" fill="#4a4f63" stroke="#646c84" stroke-width="0.8"/><path d="M3.5 4.5H5.5" stroke="#7f8aa5" stroke-width="0.7"/></svg>
<div class="a" style="left:0px;top:511.5px;width:57px;height:8.9px;background:#3a3a3a;"></div>
<div class="t" style="left:5.00px;top:513px;font-size:5.2px;line-height:6px;color:#c4c4c4;transform:scaleX(0.800);">Geometry Spreadsheet</div>
<div class="a" style="left:52px;top:515px;width:2px;height:2px;background:#c8c8c8;opacity:0.8"></div>
<div class="t" style="left:59.80px;top:513px;font-size:5.2px;line-height:6px;color:#c4c4c4;transform:scaleX(0.807);">Performance Monitor</div>
<div class="a" style="left:103px;top:515px;width:2px;height:2px;background:#c8c8c8;opacity:0.8"></div>
<div class="t" style="left:111.00px;top:513px;font-size:5.2px;line-height:6px;color:#c4c4c4;transform:scaleX(0.805);">Bundle List</div>
<div class="a" style="left:138px;top:515px;width:2px;height:2px;background:#c8c8c8;opacity:0.8"></div>
<div class="t" style="left:145.40px;top:513px;font-size:5.2px;line-height:6px;color:#c4c4c4;transform:scaleX(0.797);">Data Tree</div>
<div class="a" style="left:170px;top:515px;width:2px;height:2px;background:#c8c8c8;opacity:0.8"></div>
<svg class="a" style="left:177.2px;top:513.6px;" width="5" height="5" viewBox="0 0 5 5"><path d="M2.5 0.6V4.4M0.6 2.5H4.4" stroke="#e4e4e4" stroke-width="1.2"/></svg>
<svg class="a" style="left:826px;top:513.6px;" width="5" height="5" viewBox="0 0 5 5"><rect x="0.3" y="0.8" width="4.4" height="3.4" fill="#e8e8e8"/></svg>
<svg class="a" style="left:836px;top:514.6px;" width="4" height="3" viewBox="0 0 4 3"><path d="M0.3 0.3H3.7L2 2.7Z" fill="#c8c8c8"/></svg>
<svg class="a" style="left:5px;top:524.6px;" width="6" height="5" viewBox="0 0 6 5"><path d="M0.3 2.5L2.8 0.3V1.6H5.7V3.4H2.8V4.7Z" fill="#555"/></svg>
<svg class="a" style="left:15px;top:524.6px;" width="6" height="5" viewBox="0 0 6 5"><path d="M5.7 2.5L3.2 0.3V1.6H0.3V3.4H3.2V4.7Z" fill="#555"/></svg>
<div class="a" style="left:24px;top:521.8000000000001px;width:802px;height:10.6px;background:#373737;border-radius:1.5px;border:0.6px solid #2d2d2d"></div>
<svg class="a" style="left:27px;top:523.6px;" width="7.5" height="7" viewBox="0 0 7.5 7"><path d="M0.8 0.5V6H3" stroke="#c8c8c8" stroke-width="0.7" fill="none"/><rect x="0" y="0" width="1.8" height="1.5" fill="#ddd"/><rect x="2.6" y="4" width="4.6" height="2.8" fill="#bbb"/><circle cx="4.3" cy="2.6" r="1.1" fill="#999"/></svg>
<div class="t" style="left:36.20px;top:524px;font-size:5.6px;line-height:6px;color:#d0d0d0;transform:scaleX(0.910);">obj</div>
<svg class="a" style="left:821px;top:526.1px;" width="3" height="2.4" viewBox="0 0 3 2.4"><path d="M0.2 0.2H2.8L1.5 2.2Z" fill="#aaa"/></svg>
<svg class="a" style="left:825.5px;top:524px;" width="8" height="6" viewBox="0 0 8 6"><path d="M0.2 3H3.4" stroke="#d8d8d8" stroke-width="0.7"/><path d="M3.2 0.9H4.1V2.1L6.2 2.4V1.4H7.2V4.6H6.2V3.6L4.1 3.9V5.1H3.2Z" fill="#e0e0e0"/></svg>
<svg class="a" style="left:833.8px;top:522.5px;" width="9" height="9" viewBox="0 0 9 9"><circle cx="4.5" cy="4.5" r="3.7" fill="#4a4f63" stroke="#646c84" stroke-width="0.8"/><path d="M3.5 4.5H5.5" stroke="#7f8aa5" stroke-width="0.7"/></svg>
<div class="t" style="left:5.00px;top:537px;font-size:5.2px;line-height:6px;color:#f0f0f0;font-weight:bold;transform:scaleX(0.869);">Node:</div>
<div class="a" style="left:256.8px;top:535.6px;width:8.4px;height:8.4px;background:#68747e;"></div>
<svg class="a" style="left:256.7px;top:535.1px;" width="8.6" height="8.6" viewBox="0 0 10 10"><rect x="1.6" y="1.6" width="6.8" height="6.8" fill="#b9c9b0"/><path d="M1.6 5H8.4M5 1.6V8.4" stroke="#6c8a6c" stroke-width="0.7"/></svg>
<svg class="a" style="left:264.4px;top:534.9000000000001px;" width="8.6" height="8.6" viewBox="0 0 10 10"><circle cx="4" cy="4" r="1.6" fill="#dcdcdc"/><path d="M6 6.4H8.4" stroke="#aaa" stroke-width="0.6"/></svg>
<svg class="a" style="left:272.7px;top:535.1px;" width="8.6" height="8.6" viewBox="0 0 10 10"><path d="M5 1.6L8 5L5 8.4L2 5Z" fill="#d8d49a"/><circle cx="5" cy="5" r="1.4" fill="#f4f0c0"/></svg>
<svg class="a" style="left:281.09999999999997px;top:535.1px;" width="8.6" height="8.6" viewBox="0 0 10 10"><path d="M2 2L6 3.2L8 7.6L3.6 8Z" fill="#cfcfa8"/><circle cx="3" cy="2.6" r="1.2" fill="#eee"/></svg>
<div class="t" style="left:291.00px;top:538px;font-size:4.8px;line-height:5px;color:#bcbcbc;transform:scaleX(0.886);">Group:</div>
<div class="a" style="left:305.7px;top:535.8px;width:72.3px;height:8.2px;background:#121212;border-radius:1px"></div>
<svg class="a" style="left:379.2px;top:535.4px;" width="8" height="8" viewBox="0 0 10 10"><path d="M1 1.2H9L6 5V8.8L4 7.6V5Z" fill="#ececec"/></svg>
<div class="a" style="left:389.2px;top:535.8px;width:33px;height:8.2px;background:#424242;border-radius:1px"></div>
<div class="a" style="left:422.8px;top:535.8px;width:6.4px;height:8.2px;background:#3c3c3c;border-radius:1px"></div>
<div class="t" style="left:394.70px;top:538px;font-size:4.8px;line-height:5px;color:#c0c0c0;transform:scaleX(0.979);">View</div>
<svg class="a" style="left:424.6px;top:538.8px;" width="3" height="2.4" viewBox="0 0 3 2.4"><path d="M0.2 0.2H2.8L1.5 2.2Z" fill="#999"/></svg>
<div class="a" style="left:432px;top:535.8px;width:41px;height:8.2px;background:#343434;border-radius:1px"></div>
<div class="a" style="left:473.4px;top:535.8px;width:6px;height:8.2px;background:#323232;border-radius:1px"></div>
<div class="t" style="left:436.00px;top:538px;font-size:4.8px;line-height:5px;color:#5e5e5e;transform:scaleX(1.003);">Intrinsics</div>
<svg class="a" style="left:475px;top:538.8px;" width="3" height="2.4" viewBox="0 0 3 2.4"><path d="M0.2 0.2H2.8L1.5 2.2Z" fill="#5a5a5a"/></svg>
<div class="t" style="left:480.20px;top:538px;font-size:4.8px;line-height:5px;color:#dcdcdc;font-weight:bold;transform:scaleX(0.878);">Attributes:</div>
<div class="a" style="left:503px;top:535.8px;width:72px;height:8.2px;background:#121212;border-radius:1px"></div>
<svg class="a" style="left:576.6px;top:535.4px;" width="8" height="8" viewBox="0 0 10 10"><path d="M1 1.2H9L6 5V8.8L4 7.6V5Z" fill="#ececec"/></svg>
<svg class="a" style="left:586.6px;top:535.6px;" width="8" height="8" viewBox="0 0 10 10"><rect x="2" y="2" width="4.6" height="4.2" fill="#dcdcdc"/><path d="M5.6 5.6L8.6 8.8L7 8.8Z" fill="#eee"/></svg>
<svg class="a" style="left:832.7px;top:535.1px;" width="8.6" height="8.6" viewBox="0 0 10 10"><circle cx="5" cy="5" r="3.7" fill="none" stroke="#e4e4e4" stroke-width="0.9"/><path d="M3.8 3.8Q5 2.4 6.2 3.8Q6.2 4.8 5 5.4V6.2" fill="none" stroke="#e4e4e4" stroke-width="0.9"/><circle cx="5" cy="7.4" r="0.5" fill="#e4e4e4"/></svg>
<div class="a" style="left:37.8px;top:544.6px;width:0.8px;height:112px;background:#242424;"></div>
<div class="a" style="left:836.5px;top:544.6px;width:6.5px;height:112px;background:#343434;"></div>
<div class="a" style="left:0px;top:544.6px;width:3.2px;height:112px;background:#343434;"></div>
<div class="a" style="left:0px;top:659.6px;width:1280px;height:29px;background:#2d2d2d;"></div>
<div class="a" style="left:0px;top:659.6px;width:4.5px;height:29px;background:#383838;"></div>
<div class="a" style="left:6.3px;top:664.4px;width:11.0px;height:10.2px;background:#3f3f3f;"></div>
<div class="a" style="left:17.55px;top:664.4px;width:11.0px;height:10.2px;background:#3f3f3f;"></div>
<div class="a" style="left:28.8px;top:664.4px;width:11.0px;height:10.2px;background:#6f7f8c;"></div>
<div class="a" style="left:40.05px;top:664.4px;width:11.0px;height:10.2px;background:#3f3f3f;"></div>
<div class="a" style="left:51.3px;top:664.4px;width:11.0px;height:10.2px;background:#3f3f3f;"></div>
<svg class="a" style="left:6.3px;top:664.4px;" width="11" height="10.2" viewBox="0 0 11 10.2"><path d="M2.2 2.8V7.4" stroke="#e6e6e6" stroke-width="0.9"/><path d="M2.8 5.1L5.6 2.9V7.3ZM5.8 5.1L8.6 2.9V7.3Z" fill="#e6e6e6"/></svg>
<svg class="a" style="left:17.55px;top:664.4px;" width="11" height="10.2" viewBox="0 0 11 10.2"><path d="M3 5.1L7.6 2.5V7.7Z" fill="#e6e6e6"/></svg>
<svg class="a" style="left:28.8px;top:664.4px;" width="11" height="10.2" viewBox="0 0 11 10.2"><rect x="3" y="2.6" width="5" height="5" fill="#dfe6ec"/></svg>
<svg class="a" style="left:40.05px;top:664.4px;" width="11" height="10.2" viewBox="0 0 11 10.2"><path d="M8 5.1L3.4 2.5V7.7Z" fill="#e6e6e6"/></svg>
<svg class="a" style="left:51.3px;top:664.4px;" width="11" height="10.2" viewBox="0 0 11 10.2"><path d="M8.8 2.8V7.4" stroke="#e6e6e6" stroke-width="0.9"/><path d="M8.2 5.1L5.4 2.9V7.3ZM5.2 5.1L2.4 2.9V7.3Z" fill="#e6e6e6"/></svg>
<div class="a" style="left:64px;top:664.4px;width:18.8px;height:10.2px;background:#161616;"></div>
<div class="t" style="left:65.30px;top:667px;font-size:4.8px;line-height:5px;color:#d0d0d0;transform:scaleX(1.000);">1</div>
<div class="a" style="left:83.6px;top:664.4px;width:11px;height:10.2px;background:#454545;"></div>
<svg class="a" style="left:83.6px;top:664.4px;" width="11" height="10.2" viewBox="0 0 11 10.2"><path d="M1.4 5.1L4.2 3.3V6.9ZM9.6 5.1L6.8 3.3V6.9Z" fill="#c4c4c4"/></svg>
<div class="a" style="left:97px;top:661.3px;width:10.5px;height:6.4px;background:#101010;border:0.7px solid #c8c8c8;border-radius:1px"></div>
<div class="t" style="left:100.20px;top:661px;font-size:5px;line-height:6px;color:#f0f0f0;transform:scaleX(1.000);">1</div>
<svg class="a" style="left:0;top:0" width="1280" height="720" viewBox="0 0 1280 720"><path d="M97 669.9H1180" stroke="#8c8c8c" stroke-width="0.7"/><path d="M98.9 668.6V670.2M103.4 668.6V670.2M107.9 668.6V670.2M112.4 668.6V670.2M116.9 668.6V670.2M121.4 668.6V670.2M125.9 668.6V670.2M130.4 668.6V670.2M134.9 668.6V670.2M139.4 668.6V670.2M143.9 668.6V670.2M148.4 668.6V670.2M152.9 668.6V670.2M157.5 668.6V670.2M162.0 668.6V670.2M166.5 668.6V670.2M171.0 668.6V670.2M175.5 668.6V670.2M180.0 668.6V670.2M184.5 668.6V670.2M189.0 668.6V670.2M193.5 668.6V670.2M198.0 668.6V670.2M202.5 667.0V670.2M207.0 668.6V670.2M211.5 668.6V670.2M216.0 668.6V670.2M220.5 668.6V670.2M225.0 668.6V670.2M229.5 668.6V670.2M234.0 668.6V670.2M238.5 668.6V670.2M243.0 668.6V670.2M247.5 668.6V670.2M252.0 668.6V670.2M256.5 668.6V670.2M261.0 668.6V670.2M265.6 668.6V670.2M270.1 668.6V670.2M274.6 668.6V670.2M279.1 668.6V670.2M283.6 668.6V670.2M288.1 668.6V670.2M292.6 668.6V670.2M297.1 668.6V670.2M301.6 668.6V670.2M306.1 668.6V670.2M310.6 667.0V670.2M315.1 668.6V670.2M319.6 668.6V670.2M324.1 668.6V670.2M328.6 668.6V670.2M333.1 668.6V670.2M337.6 668.6V670.2M342.1 668.6V670.2M346.6 668.6V670.2M351.1 668.6V670.2M355.6 668.6V670.2M360.1 668.6V670.2M364.6 668.6V670.2M369.1 668.6V670.2M373.7 668.6V670.2M378.2 668.6V670.2M382.7 668.6V670.2M387.2 668.6V670.2M391.7 668.6V670.2M396.2 668.6V670.2M400.7 668.6V670.2M405.2 668.6V670.2M409.7 668.6V670.2M414.2 668.6V670.2M418.7 667.0V670.2M423.2 668.6V670.2M427.7 668.6V670.2M432.2 668.6V670.2M436.7 668.6V670.2M441.2 668.6V670.2M445.7 668.6V670.2M450.2 668.6V670.2M454.7 668.6V670.2M459.2 668.6V670.2M463.7 668.6V670.2M468.2 668.6V670.2M472.7 668.6V670.2M477.2 668.6V670.2M481.8 668.6V670.2M486.3 668.6V670.2M490.8 668.6V670.2M495.3 668.6V670.2M499.8 668.6V670.2M504.3 668.6V670.2M508.8 668.6V670.2M513.3 668.6V670.2M517.8 668.6V670.2M522.3 668.6V670.2M526.8 667.0V670.2M531.3 668.6V670.2M535.8 668.6V670.2M540.3 668.6V670.2M544.8 668.6V670.2M549.3 668.6V670.2M553.8 668.6V670.2M558.3 668.6V670.2M562.8 668.6V670.2M567.3 668.6V670.2M571.8 668.6V670.2M576.3 668.6V670.2M580.8 668.6V670.2M585.4 668.6V670.2M589.9 668.6V670.2M594.4 668.6V670.2M598.9 668.6V670.2M603.4 668.6V670.2M607.9 668.6V670.2M612.4 668.6V670.2M616.9 668.6V670.2M621.4 668.6V670.2M625.9 668.6V670.2M630.4 668.6V670.2M634.9 667.0V670.2M639.4 668.6V670.2M643.9 668.6V670.2M648.4 668.6V670.2M652.9 668.6V670.2M657.4 668.6V670.2M661.9 668.6V670.2M666.4 668.6V670.2M670.9 668.6V670.2M675.4 668.6V670.2M679.9 668.6V670.2M684.4 668.6V670.2M688.9 668.6V670.2M693.4 668.6V670.2M698.0 668.6V670.2M702.5 668.6V670.2M707.0 668.6V670.2M711.5 668.6V670.2M716.0 668.6V670.2M720.5 668.6V670.2M725.0 668.6V670.2M729.5 668.6V670.2M734.0 668.6V670.2M738.5 668.6V670.2M743.0 667.0V670.2M747.5 668.6V670.2M752.0 668.6V670.2M756.5 668.6V670.2M761.0 668.6V670.2M765.5 668.6V670.2M770.0 668.6V670.2M774.5 668.6V670.2M779.0 668.6V670.2M783.5 668.6V670.2M788.0 668.6V670.2M792.5 668.6V670.2M797.0 668.6V670.2M801.5 668.6V670.2M806.1 668.6V670.2M810.6 668.6V670.2M815.1 668.6V670.2M819.6 668.6V670.2M824.1 668.6V670.2M828.6 668.6V670.2M833.1 668.6V670.2M837.6 668.6V670.2M842.1 668.6V670.2M846.6 668.6V670.2M851.1 667.0V670.2M855.6 668.6V670.2M860.1 668.6V670.2M864.6 668.6V670.2M869.1 668.6V670.2M873.6 668.6V670.2M878.1 668.6V670.2M882.6 668.6V670.2M887.1 668.6V670.2M891.6 668.6V670.2M896.1 668.6V670.2M900.6 668.6V670.2M905.1 668.6V670.2M909.6 668.6V670.2M914.2 668.6V670.2M918.7 668.6V670.2M923.2 668.6V670.2M927.7 668.6V670.2M932.2 668.6V670.2M936.7 668.6V670.2M941.2 668.6V670.2M945.7 668.6V670.2M950.2 668.6V670.2M954.7 668.6V670.2M959.2 667.0V670.2M963.7 668.6V670.2M968.2 668.6V670.2M972.7 668.6V670.2M977.2 668.6V670.2M981.7 668.6V670.2M986.2 668.6V670.2M990.7 668.6V670.2M995.2 668.6V670.2M999.7 668.6V670.2M1004.2 668.6V670.2M1008.7 668.6V670.2M1013.2 668.6V670.2M1017.7 668.6V670.2M1022.3 668.6V670.2M1026.8 668.6V670.2M1031.3 668.6V670.2M1035.8 668.6V670.2M1040.3 668.6V670.2M1044.8 668.6V670.2M1049.3 668.6V670.2M1053.8 668.6V670.2M1058.3 668.6V670.2M1062.8 668.6V670.2M1067.3 667.0V670.2M1071.8 668.6V670.2M1076.3 668.6V670.2M1080.8 668.6V670.2M1085.3 668.6V670.2M1089.8 668.6V670.2M1094.3 668.6V670.2M1098.8 668.6V670.2M1103.3 668.6V670.2M1107.8 668.6V670.2M1112.3 668.6V670.2M1116.8 668.6V670.2M1121.3 668.6V670.2M1125.9 668.6V670.2M1130.4 668.6V670.2M1134.9 668.6V670.2M1139.4 668.6V670.2M1143.9 668.6V670.2M1148.4 668.6V670.2M1152.9 668.6V670.2M1157.4 668.6V670.2M1161.9 668.6V670.2M1166.4 668.6V670.2M1170.9 668.6V670.2M1175.4 667.0V670.2" stroke="#a0a0a0" stroke-width="0.6" fill="none"/><path d="M133 683.6H1180" stroke="#a4a4a4" stroke-width="0.9"/><path d="M133.4 681.6L136 683.6L133.4 685.6Z" fill="#d0d0d0"/></svg>
<div class="t" style="left:200.60px;top:661px;font-size:3.8px;line-height:4px;color:#8a8a8a;transform:scaleX(0.900);">24</div>
<div class="t" style="left:308.80px;top:661px;font-size:3.8px;line-height:4px;color:#8a8a8a;transform:scaleX(0.900);">48</div>
<div class="t" style="left:416.10px;top:661px;font-size:3.8px;line-height:4px;color:#8a8a8a;transform:scaleX(0.900);">72</div>
<div class="t" style="left:524.50px;top:661px;font-size:3.8px;line-height:4px;color:#8a8a8a;transform:scaleX(0.900);">96</div>
<div class="t" style="left:632.75px;top:661px;font-size:3.8px;line-height:4px;color:#8a8a8a;transform:scaleX(0.900);">120</div>
<div class="t" style="left:740.55px;top:661px;font-size:3.8px;line-height:4px;color:#8a8a8a;transform:scaleX(0.900);">144</div>
<div class="t" style="left:848.15px;top:661px;font-size:3.8px;line-height:4px;color:#8a8a8a;transform:scaleX(0.900);">168</div>
<div class="a" style="left:6.3px;top:678.2px;width:11.0px;height:9.6px;background:#3d3d3d;"></div>
<div class="a" style="left:17.55px;top:678.2px;width:11.0px;height:9.6px;background:#3d3d3d;"></div>
<div class="a" style="left:28.8px;top:678.2px;width:11.0px;height:9.6px;background:#3d3d3d;"></div>
<div class="a" style="left:40.05px;top:678.2px;width:11.0px;height:9.6px;background:#3d3d3d;"></div>
<div class="a" style="left:51.3px;top:678.2px;width:11.0px;height:9.6px;background:#3d3d3d;"></div>
<svg class="a" style="left:6.3px;top:678.2px;" width="11" height="9.6" viewBox="0 0 11 9.6"><rect x="2.6" y="2" width="4.4" height="5" fill="#e8e8e8"/><path d="M6 5.4L9 8.2L7.6 8.4L6.4 9Z" fill="#fff"/><path d="M3.4 1.2H7.8V5.6" stroke="#aaa" stroke-width="0.6" fill="none"/></svg>
<svg class="a" style="left:17.55px;top:678.2px;" width="11" height="9.6" viewBox="0 0 11 9.6"><ellipse cx="6" cy="4.8" rx="2" ry="3.4" fill="none" stroke="#e0e0e0" stroke-width="0.8"/><path d="M3.2 2V7.6" stroke="#ddd" stroke-width="0.8"/><path d="M6 2.6V5.4" stroke="#ddd" stroke-width="0.6"/></svg>
<svg class="a" style="left:28.8px;top:678.2px;" width="11" height="9.6" viewBox="0 0 11 9.6"><path d="M3 4.2Q6 2 8.6 4.6" fill="none" stroke="#e6e6e6" stroke-width="0.9"/><path d="M2.4 3L2.8 5.2L4.8 4.4Z" fill="#e6e6e6"/><path d="M2.6 7.2H8.8" stroke="#e6e6e6" stroke-width="0.9"/></svg>
<svg class="a" style="left:40.05px;top:678.2px;" width="11" height="9.6" viewBox="0 0 11 9.6"><circle cx="5.5" cy="4.8" r="3.3" fill="none" stroke="#e6e6e6" stroke-width="0.8"/><circle cx="5.5" cy="4.8" r="1.7" fill="none" stroke="#e6e6e6" stroke-width="0.7"/><path d="M5.5 3.6V5" stroke="#e6e6e6" stroke-width="0.6"/></svg>
<svg class="a" style="left:51.3px;top:678.2px;" width="11" height="9.6" viewBox="0 0 11 9.6"><path d="M2 4.4Q3.4 2.4 4.6 4.4T7.2 4.4T9 4.4V7.6" fill="none" stroke="#6c6c6c" stroke-width="0.8"/></svg>
<svg class="a" style="left:66px;top:680.5px;" width="6" height="5" viewBox="0 0 6 5"><path d="M1 0.6V4.4" stroke="#4c4c4c" stroke-width="0.7"/><path d="M1.6 2.5L4.6 0.6V4.4Z" fill="#4c4c4c"/></svg>
<svg class="a" style="left:75.5px;top:680.5px;" width="6" height="5" viewBox="0 0 6 5"><path d="M5 0.6V4.4" stroke="#4c4c4c" stroke-width="0.7"/><path d="M4.4 2.5L1.4 0.6V4.4Z" fill="#4c4c4c"/></svg>
<div class="a" style="left:97px;top:678.6px;width:17px;height:9px;background:#333;"></div>
<div class="t" style="left:98.60px;top:681px;font-size:4.8px;line-height:5px;color:#d8d8d8;transform:scaleX(1.000);">1</div>
<div class="a" style="left:115.6px;top:678.6px;width:16.6px;height:9px;background:#1b1b1b;"></div>
<div class="t" style="left:117.40px;top:681px;font-size:4.8px;line-height:5px;color:#d8d8d8;transform:scaleX(1.000);">1</div>
<div class="a" style="left:1203px;top:664px;width:9.2px;height:9.4px;background:#3d3d3d;"></div>
<svg class="a" style="left:1203px;top:664px;" width="9.2" height="9.4" viewBox="0 0 9.2 9.4"><rect x="2" y="2" width="5.2" height="5.2" fill="none" stroke="#d8d8d8" stroke-width="0.7"/><path d="M1.4 1.4H3M6.2 1.4H7.8M1.4 7.8H3M6.2 7.8H7.8M3.2 4.6H6" stroke="#eee" stroke-width="0.8"/></svg>
<div class="a" style="left:1215.2px;top:664px;width:62.8px;height:9.2px;background:#454545;border-radius:1px"></div>
<div class="t" style="left:1221.70px;top:667px;font-size:4.6px;line-height:5px;color:#d0d0d0;transform:scaleX(0.975);">0 keys, 0/0 channels</div>
<svg class="a" style="left:1272.4px;top:667.4px;" width="3" height="2.4" viewBox="0 0 3 2.4"><path d="M0.2 2.2H2.8L1.5 0.2Z" fill="#aaa"/></svg>
<div class="a" style="left:1203px;top:675.3px;width:9.2px;height:9px;background:#1c1c1c;"></div>
<svg class="a" style="left:1203px;top:675.3px;" width="9.2" height="9" viewBox="0 0 9.2 9"><path d="M1.6 5.4H7.8M2 3Q4.6 5.6 7.4 2.4" fill="none" stroke="#e8e8e8" stroke-width="1"/></svg>
<div class="a" style="left:1214.3px;top:676.2px;width:57.3px;height:8.2px;background:#434343;border-radius:1px"></div>
<div class="t" style="left:1219.70px;top:678px;font-size:4.6px;line-height:5px;color:#c8c8c8;transform:scaleX(0.958);">Key All Channels</div>
<svg class="a" style="left:1272.6px;top:677px;" width="3.4" height="6.6" viewBox="0 0 3.4 6.6"><path d="M1.7 0.4L3.2 2.4H0.2ZM1.7 6.2L3.2 4.2H0.2Z" fill="#aaa"/></svg>
<div class="a" style="left:0px;top:688.6px;width:1280px;height:9px;background:#191919;"></div>
<div class="a" style="left:1212px;top:688.6px;width:68px;height:8.8px;background:#2a2a2a;"></div>
<div class="a" style="left:1234px;top:689.8px;width:38px;height:7.6px;background:#414141;border-radius:1px"></div>
<div class="t" style="left:1240.00px;top:692px;font-size:4.6px;line-height:5px;color:#c4c4c4;transform:scaleX(0.989);">Auto Update</div>
<svg class="a" style="left:1274px;top:690.4px;" width="3.4" height="6.6" viewBox="0 0 3.4 6.6"><path d="M1.7 0.4L3.2 2.4H0.2ZM1.7 6.2L3.2 4.2H0.2Z" fill="#999"/></svg>
<svg class="a" style="left:1213.5px;top:691.3px;" width="7" height="6" viewBox="0 0 7 6"><ellipse cx="3.5" cy="2.8" rx="3.2" ry="2.4" fill="#d4d4d4"/><path d="M1.6 4.4L1 5.8L3 4.8Z" fill="#d4d4d4"/></svg>
<svg class="a" style="left:1225px;top:691.3px;" width="6" height="6" viewBox="0 0 6 6"><path d="M1 4.6V2.4Q1 1.2 2.4 1.2H4.6" fill="none" stroke="#4a4a4a" stroke-width="0.9"/><path d="M4.2 0.2L5.6 1.2L4.2 2.2Z" fill="#4a4a4a"/></svg>
<div class="a" style="left:0px;top:697.5px;width:1280px;height:22.5px;background:linear-gradient(90deg,#d6c8b2 0,#e2d6c2 30px,#eadfcb 90px,#e6dac6 150px,#e8decc 250px,#e2dacc 312px,#8a9699 320px,#7d8a8e 348px,#c2c7c8 354px,#bfc5c6 368px,#56646a 373px,#7f8b90 382px,#7a868b 418px,#8a9397 430px,#7c888c 462px,#1f2b31 467px,#1f2b31 477px,#dde5eb 481px,#e2e8ec 522px,#6c7880 528px,#9aa6ac 540px,#dfe4e6 546px,#cfd6da 568px,#e8ecee 572px,#e6eaec 588px,#5a6c78 594px,#8a9aa4 612px,#5c6c74 630px,#1a2c30 642px,#0f2a2a 660px,#143234 740px,#2a4e56 765px,#2a5058 812px,#d8a070 817px,#e6eaea 823px,#e4e8e8 900px,#dfe3e0 1200px,#e9edea 1225px,#e4e8e6 1280px);"></div>
<svg class="a" style="left:0px;top:697.4px;filter:blur(0.8px)" width="1280" height="22.6" viewBox="0 0 1280 22.6"><path d="M10 12Q20 2 36 0L30 5Q20 8 13 14Z" fill="#5f7fae"/><path d="M120 12Q135 2 168 0L150 6Q132 10 122 14Z" fill="#b9adb6" fill-opacity="0.9"/><path d="M0 18.5H25V22.6H0Z" fill="#d2b48a"/><rect x="326" y="0" width="5" height="23" fill="#55656b"/><rect x="337" y="4" width="6" height="19" fill="#65757b"/><rect x="392" y="2" width="6" height="21" fill="#5a6a70"/><rect x="405" y="8" width="8" height="15" fill="#9aa6aa"/><rect x="440" y="0" width="6" height="23" fill="#4e6268"/><rect x="452" y="6" width="7" height="17" fill="#5c7076"/><path d="M482 10L492 6L494 14L486 18Z" fill="#d8743a"/><rect x="500" y="3" width="16" height="3" fill="#c8684a" fill-opacity="0.7"/><rect x="506" y="10" width="12" height="8" fill="#b9c6d2"/><rect x="548" y="8" width="6" height="10" fill="#8a98a4"/><rect x="558" y="6" width="5" height="14" fill="#7a8a96"/><rect x="575" y="2" width="8" height="3" fill="#d88a5a"/><rect x="598" y="10" width="10" height="8" fill="#3e6a8a"/><rect x="616" y="4" width="10" height="6" fill="#dfe6ea"/><rect x="1240" y="3" width="6" height="5" fill="#3a56a8"/><path d="M1246 6Q1256 2 1262 10Q1258 16 1248 14Z" fill="#e6b7a8"/><path d="M1256 2Q1266 0 1268 8L1262 10Z" fill="#5c8c8c"/><path d="M1268 4L1280 10V16L1266 8Z" fill="#a8566a"/><rect x="1253" y="15" width="6" height="8" fill="#d8dc4a"/><rect x="1259" y="15" width="5" height="8" fill="#5ad8c8"/><rect x="1264" y="15" width="5" height="8" fill="#5cd65a"/><rect x="1269" y="15" width="4" height="8" fill="#e0523a"/><rect x="1273" y="15" width="7" height="8" fill="#3a3ae0"/></svg>
<svg class="a" style="left:860px;top:480px;filter:blur(0.7px)" width="420" height="240" viewBox="860 480 420 240"><defs><radialGradient id="fc" cx="0.45" cy="0.45" r="0.65"><stop offset="0" stop-color="#d3a594"/><stop offset="0.7" stop-color="#c4917e"/><stop offset="1" stop-color="#9e6c58"/></radialGradient><linearGradient id="hr" x1="0" y1="0" x2="1" y2="1"><stop offset="0" stop-color="#5a3a26"/><stop offset="0.5" stop-color="#8a5e3e"/><stop offset="1" stop-color="#5c3c28"/></linearGradient></defs><path d="M1076 600Q1090 574 1112 576Q1132 580 1141 608L1150 652L1076 652Z" fill="#0b0b0b"/><path d="M990 548Q990 500 1040 497Q1098 498 1100 556" fill="none" stroke="#171717" stroke-width="5"/><ellipse cx="1054" cy="640" rx="40" ry="24" fill="#c39a88"/><path d="M903 720L904 698L915 693Q922 672 940 655Q956 643 980 636L1008 627Q1015 625 1018 632Q1026 658 1055 660Q1082 658 1091 630Q1094 624 1102 625L1150 641Q1170 650 1181 670L1196 702L1199 720Z" fill="#0a0a0a"/><ellipse cx="1042" cy="546" rx="50" ry="47" fill="#6a452e"/><ellipse cx="1044" cy="592" rx="46" ry="57" fill="url(#fc)"/><path d="M1000 590Q1002 640 1044 649Q1084 640 1088 588Q1080 620 1066 624Q1058 606 1042 606Q1026 606 1020 624Q1006 618 1000 590Z" fill="#8e5e46" fill-opacity="0.75"/><path d="M1022 600Q1040 590 1060 598L1062 604Q1042 598 1022 606Z" fill="#7e4c34"/><path d="M1027 606Q1042 603 1057 606Q1050 615 1040 615Q1030 614 1027 606Z" fill="#5c2e28"/><path d="M1030 606.5Q1042 604.5 1054 606.5L1052 609Q1042 607.5 1032 609Z" fill="#e8dcd4"/><path d="M994 572Q984 522 1012 505Q1044 490 1076 504Q1098 520 1093 566L1087 560Q1086 544 1074 538Q1050 534 1030 544Q1012 552 1003 566L1000 580Z" fill="url(#hr)"/><rect x="985" y="536" width="12" height="68" rx="6" fill="#121212"/><path d="M988 546V596" stroke="#9a9a9a" stroke-width="1.2"/><rect x="1090" y="546" width="14" height="54" rx="7" fill="#121212"/><path d="M1101 556V592" stroke="#8a8a8a" stroke-width="1.2"/><circle cx="1081.5" cy="508" r="1.6" fill="#cfcfcf"/><rect x="1002" y="562.5" width="33" height="18.5" rx="4" fill="#c9a08c" fill-opacity="0.35" stroke="#1e1214" stroke-width="2.6"/><rect x="1043.5" y="561" width="38" height="19" rx="4" fill="#c9a08c" fill-opacity="0.35" stroke="#1e1214" stroke-width="2.6"/><path d="M1035 568Q1039 565.5 1043.5 567.5M1081.5 564L1092 561M1002 566L997 565" stroke="#2a1714" stroke-width="2" fill="none"/><ellipse cx="1019" cy="571.5" rx="4" ry="1.8" fill="#3a2620"/><ellipse cx="1061" cy="570.5" rx="4" ry="1.8" fill="#3a2620"/><path d="M1036 590Q1041 594 1047 590" stroke="#a26e56" stroke-width="1.5" fill="none"/><path d="M1100 598Q1107 640 1109 720" stroke="#0c0c0c" stroke-width="1.1" fill="none"/><path d="M974 722V716L1018 698L1046 716V722" fill="#22407e" stroke="#74a878" stroke-width="3.4" stroke-linejoin="round"/><path d="M884 720Q886 706 902 701Q918 697 932 701Q944 700 948 707Q949 714 942 717L936 720Z" fill="#d6b4a4"/><path d="M930 704Q934 712 942 716" stroke="#b08a7a" stroke-width="1" fill="none"/></svg>
</body></html>
